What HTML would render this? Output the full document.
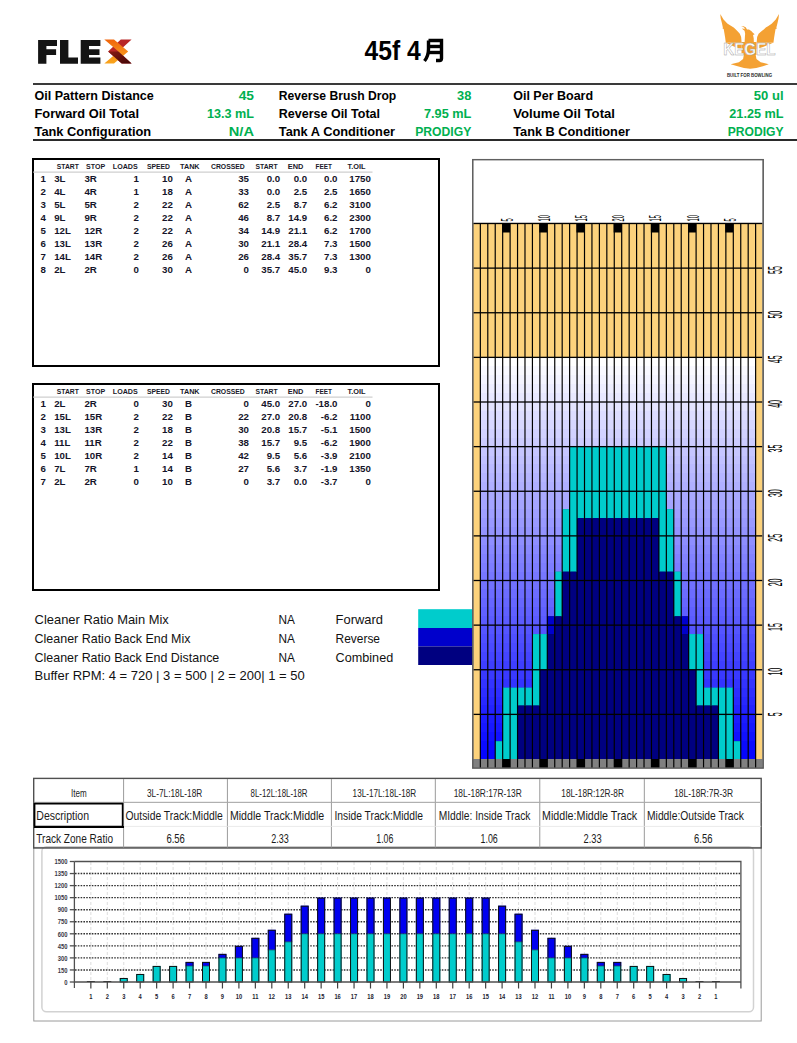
<!DOCTYPE html>
<html><head><meta charset="utf-8"><title>FLEX 45f</title>
<style>
html,body{margin:0;padding:0;background:#fff;}
body{width:797px;height:1043px;overflow:hidden;position:relative;}
svg{position:absolute;left:0;top:0;font-family:"Liberation Sans", sans-serif;}
</style></head><body>
<svg width="797" height="1043" viewBox="0 0 797 1043">
<g id="flex">
<path d="M38.1,40 H57 V46.1 H46.4 V49.2 H56.1 V54.9 H46.4 V63.7 H38.1 Z" fill="#141414"/>
<path d="M60,40 H68.4 V57.5 H78 V63.7 H60 Z" fill="#141414"/>
<path d="M80.7,40 H100.4 V46.1 H89 V49.2 H99.5 V54.9 H89 V57.5 H100.4 V63.7 H80.7 Z" fill="#141414"/>
<defs>
<linearGradient id="gor" x1="0" y1="0" x2="1" y2="1"><stop offset="0" stop-color="#f0600a"/><stop offset="1" stop-color="#f7941d"/></linearGradient>
<linearGradient id="grd" x1="0" y1="0" x2="1" y2="1"><stop offset="0" stop-color="#8a1a14"/><stop offset="1" stop-color="#3e0606"/></linearGradient>
</defs>
<linearGradient id="gor2" x1="0" y1="0" x2="0" y2="1"><stop offset="0" stop-color="#f0650c"/><stop offset="0.5" stop-color="#f68a1a"/><stop offset="1" stop-color="#f9a51c"/></linearGradient>
<path d="M120.8,39.6 H131.6 L118.5,51.6 L131.6,63.6 H121.7 L108.1,51.6 Z" fill="#b82626"/>
<path d="M104.3,39.6 H114 L128.2,51.6 L114,63.6 H104.3 L118.5,51.6 Z" fill="url(#gor2)"/>
<path d="M108.1,51.6 H118.5 L131.6,63.6 H121.7 Z" fill="url(#grd)"/>
</g>
<text x="364.6" y="59.5" font-size="28" font-weight="bold" fill="#000" text-anchor="start" textLength="56.2" lengthAdjust="spacingAndGlyphs" >45f 4</text>
<g fill="none" stroke="#000" stroke-width="3.4" stroke-linecap="butt">
<path d="M428.5,40.5 V49 Q428.5,56 424.5,61"/>
<path d="M428.5,40.5 H441.5 V58.5 Q441.5,60.5 439.5,60.5 H436"/>
<path d="M428.5,46.5 H441.5"/>
<path d="M428.5,52.5 H441.5"/>
</g>
<g id="kegel" fill="#f4a133">
<polygon points="720.26,14.08 720.67,18.16 721.89,23.05 722.87,27.54 722.55,28.60 723.69,28.92 724.50,33.65 725.16,37.73 725.81,42.63 741.63,42.63 741.14,36.92 739.84,33.82 737.80,31.62 734.54,28.35 733.72,27.46 731.27,25.91 727.60,23.70 723.53,19.62"/>
<polygon points="778.99,14.08 778.58,18.16 777.52,23.05 776.38,27.54 776.87,28.60 775.56,28.92 774.75,33.65 774.10,37.73 773.44,42.63 756.64,42.63 757.13,36.92 758.60,33.65 761.45,31.37 765.12,28.35 765.78,27.46 767.98,26.15 771.65,23.70 775.73,19.62"/>
<polygon points="741.06,25.91 743.51,26.15 745.71,27.29 747.02,29.41 748.97,29.58 751.26,31.04 752.89,32.84 754.68,34.31 753.05,34.88 753.70,38.14 753.87,42.63 744.57,42.63 744.90,36.92 745.14,33.65 744.57,30.80 742.94,29.58 741.88,28.60 743.75,28.76 744.73,29.25 744.41,27.78 742.94,26.72"/>
<polygon points="743.98,54.37 755.58,54.37 756.45,58.94 760.67,62.28 768.75,64.21 762.87,66.14 756.28,67.90 750.13,68.78 743.98,67.90 737.66,66.14 730.63,64.21 738.89,62.28 743.10,58.94"/>
<rect x="741.5" y="42" width="15" height="13" fill="#f4a133"/><polygon points="726.5,43 741.5,43 741.5,49 735,47"/><polygon points="772.5,43 756.5,43 756.5,49 763,47"/>
</g>
<text x="749.4" y="54.6" font-size="16.8" font-weight="bold" fill="#fff" stroke="#a0a0a0" stroke-width="0.45" text-anchor="middle" textLength="52.3" lengthAdjust="spacingAndGlyphs">KEGEL</text>
<text x="749.5" y="77.1" font-size="6.2" font-weight="bold" fill="#2a2a2a" text-anchor="middle" textLength="45.2" lengthAdjust="spacingAndGlyphs">BUILT FOR BOWLING</text>

<rect x="33" y="83" width="764" height="2" fill="#3a3a3a"/>
<rect x="33" y="139" width="764" height="2" fill="#2a2a2a"/>
<text x="34.5" y="99.8" font-size="12.6" font-weight="bold" fill="#000" text-anchor="start" textLength="119.3" lengthAdjust="spacingAndGlyphs" >Oil Pattern Distance</text>
<text x="254" y="99.8" font-size="12.6" font-weight="bold" fill="#00b050" text-anchor="end" textLength="15.3" lengthAdjust="spacingAndGlyphs" >45</text>
<text x="34.5" y="117.8" font-size="12.6" font-weight="bold" fill="#000" text-anchor="start" textLength="104.5" lengthAdjust="spacingAndGlyphs" >Forward Oil Total</text>
<text x="254" y="117.8" font-size="12.6" font-weight="bold" fill="#00b050" text-anchor="end" textLength="47" lengthAdjust="spacingAndGlyphs" >13.3 mL</text>
<text x="34.5" y="135.8" font-size="12.6" font-weight="bold" fill="#000" text-anchor="start" textLength="116.7" lengthAdjust="spacingAndGlyphs" >Tank Configuration</text>
<text x="254" y="135.8" font-size="12.6" font-weight="bold" fill="#00b050" text-anchor="end" textLength="25.2" lengthAdjust="spacingAndGlyphs" >N/A</text>
<text x="278.8" y="99.8" font-size="12.6" font-weight="bold" fill="#000" text-anchor="start" textLength="117.5" lengthAdjust="spacingAndGlyphs" >Reverse Brush Drop</text>
<text x="471.3" y="99.8" font-size="12.6" font-weight="bold" fill="#00b050" text-anchor="end" textLength="14.3" lengthAdjust="spacingAndGlyphs" >38</text>
<text x="278.8" y="117.8" font-size="12.6" font-weight="bold" fill="#000" text-anchor="start" textLength="101.2" lengthAdjust="spacingAndGlyphs" >Reverse Oil Total</text>
<text x="471.3" y="117.8" font-size="12.6" font-weight="bold" fill="#00b050" text-anchor="end" textLength="47.3" lengthAdjust="spacingAndGlyphs" >7.95 mL</text>
<text x="278.8" y="135.8" font-size="12.6" font-weight="bold" fill="#000" text-anchor="start" textLength="116.2" lengthAdjust="spacingAndGlyphs" >Tank A Conditioner</text>
<text x="471.3" y="135.8" font-size="12.6" font-weight="bold" fill="#00b050" text-anchor="end" textLength="56.1" lengthAdjust="spacingAndGlyphs" >PRODIGY</text>
<text x="513.2" y="99.8" font-size="12.6" font-weight="bold" fill="#000" text-anchor="start" textLength="79.9" lengthAdjust="spacingAndGlyphs" >Oil Per Board</text>
<text x="783.6" y="99.8" font-size="12.6" font-weight="bold" fill="#00b050" text-anchor="end" textLength="29.8" lengthAdjust="spacingAndGlyphs" >50 ul</text>
<text x="513.2" y="117.8" font-size="12.6" font-weight="bold" fill="#000" text-anchor="start" textLength="101.8" lengthAdjust="spacingAndGlyphs" >Volume Oil Total</text>
<text x="783.6" y="117.8" font-size="12.6" font-weight="bold" fill="#00b050" text-anchor="end" textLength="54.3" lengthAdjust="spacingAndGlyphs" >21.25 mL</text>
<text x="513.2" y="135.8" font-size="12.6" font-weight="bold" fill="#000" text-anchor="start" textLength="116.8" lengthAdjust="spacingAndGlyphs" >Tank B Conditioner</text>
<text x="783.6" y="135.8" font-size="12.6" font-weight="bold" fill="#00b050" text-anchor="end" textLength="55.9" lengthAdjust="spacingAndGlyphs" >PRODIGY</text>
<rect x="33" y="159" width="406" height="207" fill="none" stroke="#000" stroke-width="2"/>
<rect x="33" y="171.6" width="339.5" height="1" fill="#c4c4c4"/>
<text x="56.8" y="168.9" font-size="7" font-weight="bold" fill="#1a1a2a" textLength="22.1" lengthAdjust="spacingAndGlyphs">START</text>
<text x="86.0" y="168.9" font-size="7" font-weight="bold" fill="#1a1a2a" textLength="19.1" lengthAdjust="spacingAndGlyphs">STOP</text>
<text x="112.8" y="168.9" font-size="7" font-weight="bold" fill="#1a1a2a" textLength="24.9" lengthAdjust="spacingAndGlyphs">LOADS</text>
<text x="147" y="168.9" font-size="7" font-weight="bold" fill="#1a1a2a" textLength="23.0" lengthAdjust="spacingAndGlyphs">SPEED</text>
<text x="180" y="168.9" font-size="7" font-weight="bold" fill="#1a1a2a" textLength="19.6" lengthAdjust="spacingAndGlyphs">TANK</text>
<text x="211" y="168.9" font-size="7" font-weight="bold" fill="#1a1a2a" textLength="33.8" lengthAdjust="spacingAndGlyphs">CROSSED</text>
<text x="255.5" y="168.9" font-size="7" font-weight="bold" fill="#1a1a2a" textLength="22.2" lengthAdjust="spacingAndGlyphs">START</text>
<text x="287.8" y="168.9" font-size="7" font-weight="bold" fill="#1a1a2a" textLength="15.6" lengthAdjust="spacingAndGlyphs">END</text>
<text x="315.6" y="168.9" font-size="7" font-weight="bold" fill="#1a1a2a" textLength="16.4" lengthAdjust="spacingAndGlyphs">FEET</text>
<text x="347.6" y="168.9" font-size="7" font-weight="bold" fill="#1a1a2a" textLength="18.0" lengthAdjust="spacingAndGlyphs">T.OIL</text>
<text transform="translate(45.8,182.2) scale(1.13,1)" font-size="8.6" font-weight="bold" fill="#15152a" text-anchor="end">1</text>
<text transform="translate(54.2,182.2) scale(1.13,1)" font-size="8.6" font-weight="bold" fill="#15152a" text-anchor="start">3L</text>
<text transform="translate(84.4,182.2) scale(1.13,1)" font-size="8.6" font-weight="bold" fill="#15152a" text-anchor="start">3R</text>
<text transform="translate(139,182.2) scale(1.13,1)" font-size="8.6" font-weight="bold" fill="#15152a" text-anchor="end">1</text>
<text transform="translate(172.8,182.2) scale(1.13,1)" font-size="8.6" font-weight="bold" fill="#15152a" text-anchor="end">10</text>
<text transform="translate(185,182.2) scale(1.13,1)" font-size="8.6" font-weight="bold" fill="#15152a" text-anchor="start">A</text>
<text transform="translate(249,182.2) scale(1.13,1)" font-size="8.6" font-weight="bold" fill="#15152a" text-anchor="end">35</text>
<text transform="translate(280.2,182.2) scale(1.13,1)" font-size="8.6" font-weight="bold" fill="#15152a" text-anchor="end">0.0</text>
<text transform="translate(307.2,182.2) scale(1.13,1)" font-size="8.6" font-weight="bold" fill="#15152a" text-anchor="end">0.0</text>
<text transform="translate(337.5,182.2) scale(1.13,1)" font-size="8.6" font-weight="bold" fill="#15152a" text-anchor="end">0.0</text>
<text transform="translate(370.9,182.2) scale(1.13,1)" font-size="8.6" font-weight="bold" fill="#15152a" text-anchor="end">1750</text>
<text transform="translate(45.8,195.15) scale(1.13,1)" font-size="8.6" font-weight="bold" fill="#15152a" text-anchor="end">2</text>
<text transform="translate(54.2,195.15) scale(1.13,1)" font-size="8.6" font-weight="bold" fill="#15152a" text-anchor="start">4L</text>
<text transform="translate(84.4,195.15) scale(1.13,1)" font-size="8.6" font-weight="bold" fill="#15152a" text-anchor="start">4R</text>
<text transform="translate(139,195.15) scale(1.13,1)" font-size="8.6" font-weight="bold" fill="#15152a" text-anchor="end">1</text>
<text transform="translate(172.8,195.15) scale(1.13,1)" font-size="8.6" font-weight="bold" fill="#15152a" text-anchor="end">18</text>
<text transform="translate(185,195.15) scale(1.13,1)" font-size="8.6" font-weight="bold" fill="#15152a" text-anchor="start">A</text>
<text transform="translate(249,195.15) scale(1.13,1)" font-size="8.6" font-weight="bold" fill="#15152a" text-anchor="end">33</text>
<text transform="translate(280.2,195.15) scale(1.13,1)" font-size="8.6" font-weight="bold" fill="#15152a" text-anchor="end">0.0</text>
<text transform="translate(307.2,195.15) scale(1.13,1)" font-size="8.6" font-weight="bold" fill="#15152a" text-anchor="end">2.5</text>
<text transform="translate(337.5,195.15) scale(1.13,1)" font-size="8.6" font-weight="bold" fill="#15152a" text-anchor="end">2.5</text>
<text transform="translate(370.9,195.15) scale(1.13,1)" font-size="8.6" font-weight="bold" fill="#15152a" text-anchor="end">1650</text>
<text transform="translate(45.8,208.1) scale(1.13,1)" font-size="8.6" font-weight="bold" fill="#15152a" text-anchor="end">3</text>
<text transform="translate(54.2,208.1) scale(1.13,1)" font-size="8.6" font-weight="bold" fill="#15152a" text-anchor="start">5L</text>
<text transform="translate(84.4,208.1) scale(1.13,1)" font-size="8.6" font-weight="bold" fill="#15152a" text-anchor="start">5R</text>
<text transform="translate(139,208.1) scale(1.13,1)" font-size="8.6" font-weight="bold" fill="#15152a" text-anchor="end">2</text>
<text transform="translate(172.8,208.1) scale(1.13,1)" font-size="8.6" font-weight="bold" fill="#15152a" text-anchor="end">22</text>
<text transform="translate(185,208.1) scale(1.13,1)" font-size="8.6" font-weight="bold" fill="#15152a" text-anchor="start">A</text>
<text transform="translate(249,208.1) scale(1.13,1)" font-size="8.6" font-weight="bold" fill="#15152a" text-anchor="end">62</text>
<text transform="translate(280.2,208.1) scale(1.13,1)" font-size="8.6" font-weight="bold" fill="#15152a" text-anchor="end">2.5</text>
<text transform="translate(307.2,208.1) scale(1.13,1)" font-size="8.6" font-weight="bold" fill="#15152a" text-anchor="end">8.7</text>
<text transform="translate(337.5,208.1) scale(1.13,1)" font-size="8.6" font-weight="bold" fill="#15152a" text-anchor="end">6.2</text>
<text transform="translate(370.9,208.1) scale(1.13,1)" font-size="8.6" font-weight="bold" fill="#15152a" text-anchor="end">3100</text>
<text transform="translate(45.8,221.05) scale(1.13,1)" font-size="8.6" font-weight="bold" fill="#15152a" text-anchor="end">4</text>
<text transform="translate(54.2,221.05) scale(1.13,1)" font-size="8.6" font-weight="bold" fill="#15152a" text-anchor="start">9L</text>
<text transform="translate(84.4,221.05) scale(1.13,1)" font-size="8.6" font-weight="bold" fill="#15152a" text-anchor="start">9R</text>
<text transform="translate(139,221.05) scale(1.13,1)" font-size="8.6" font-weight="bold" fill="#15152a" text-anchor="end">2</text>
<text transform="translate(172.8,221.05) scale(1.13,1)" font-size="8.6" font-weight="bold" fill="#15152a" text-anchor="end">22</text>
<text transform="translate(185,221.05) scale(1.13,1)" font-size="8.6" font-weight="bold" fill="#15152a" text-anchor="start">A</text>
<text transform="translate(249,221.05) scale(1.13,1)" font-size="8.6" font-weight="bold" fill="#15152a" text-anchor="end">46</text>
<text transform="translate(280.2,221.05) scale(1.13,1)" font-size="8.6" font-weight="bold" fill="#15152a" text-anchor="end">8.7</text>
<text transform="translate(307.2,221.05) scale(1.13,1)" font-size="8.6" font-weight="bold" fill="#15152a" text-anchor="end">14.9</text>
<text transform="translate(337.5,221.05) scale(1.13,1)" font-size="8.6" font-weight="bold" fill="#15152a" text-anchor="end">6.2</text>
<text transform="translate(370.9,221.05) scale(1.13,1)" font-size="8.6" font-weight="bold" fill="#15152a" text-anchor="end">2300</text>
<text transform="translate(45.8,234.0) scale(1.13,1)" font-size="8.6" font-weight="bold" fill="#15152a" text-anchor="end">5</text>
<text transform="translate(54.2,234.0) scale(1.13,1)" font-size="8.6" font-weight="bold" fill="#15152a" text-anchor="start">12L</text>
<text transform="translate(84.4,234.0) scale(1.13,1)" font-size="8.6" font-weight="bold" fill="#15152a" text-anchor="start">12R</text>
<text transform="translate(139,234.0) scale(1.13,1)" font-size="8.6" font-weight="bold" fill="#15152a" text-anchor="end">2</text>
<text transform="translate(172.8,234.0) scale(1.13,1)" font-size="8.6" font-weight="bold" fill="#15152a" text-anchor="end">22</text>
<text transform="translate(185,234.0) scale(1.13,1)" font-size="8.6" font-weight="bold" fill="#15152a" text-anchor="start">A</text>
<text transform="translate(249,234.0) scale(1.13,1)" font-size="8.6" font-weight="bold" fill="#15152a" text-anchor="end">34</text>
<text transform="translate(280.2,234.0) scale(1.13,1)" font-size="8.6" font-weight="bold" fill="#15152a" text-anchor="end">14.9</text>
<text transform="translate(307.2,234.0) scale(1.13,1)" font-size="8.6" font-weight="bold" fill="#15152a" text-anchor="end">21.1</text>
<text transform="translate(337.5,234.0) scale(1.13,1)" font-size="8.6" font-weight="bold" fill="#15152a" text-anchor="end">6.2</text>
<text transform="translate(370.9,234.0) scale(1.13,1)" font-size="8.6" font-weight="bold" fill="#15152a" text-anchor="end">1700</text>
<text transform="translate(45.8,246.95) scale(1.13,1)" font-size="8.6" font-weight="bold" fill="#15152a" text-anchor="end">6</text>
<text transform="translate(54.2,246.95) scale(1.13,1)" font-size="8.6" font-weight="bold" fill="#15152a" text-anchor="start">13L</text>
<text transform="translate(84.4,246.95) scale(1.13,1)" font-size="8.6" font-weight="bold" fill="#15152a" text-anchor="start">13R</text>
<text transform="translate(139,246.95) scale(1.13,1)" font-size="8.6" font-weight="bold" fill="#15152a" text-anchor="end">2</text>
<text transform="translate(172.8,246.95) scale(1.13,1)" font-size="8.6" font-weight="bold" fill="#15152a" text-anchor="end">26</text>
<text transform="translate(185,246.95) scale(1.13,1)" font-size="8.6" font-weight="bold" fill="#15152a" text-anchor="start">A</text>
<text transform="translate(249,246.95) scale(1.13,1)" font-size="8.6" font-weight="bold" fill="#15152a" text-anchor="end">30</text>
<text transform="translate(280.2,246.95) scale(1.13,1)" font-size="8.6" font-weight="bold" fill="#15152a" text-anchor="end">21.1</text>
<text transform="translate(307.2,246.95) scale(1.13,1)" font-size="8.6" font-weight="bold" fill="#15152a" text-anchor="end">28.4</text>
<text transform="translate(337.5,246.95) scale(1.13,1)" font-size="8.6" font-weight="bold" fill="#15152a" text-anchor="end">7.3</text>
<text transform="translate(370.9,246.95) scale(1.13,1)" font-size="8.6" font-weight="bold" fill="#15152a" text-anchor="end">1500</text>
<text transform="translate(45.8,259.9) scale(1.13,1)" font-size="8.6" font-weight="bold" fill="#15152a" text-anchor="end">7</text>
<text transform="translate(54.2,259.9) scale(1.13,1)" font-size="8.6" font-weight="bold" fill="#15152a" text-anchor="start">14L</text>
<text transform="translate(84.4,259.9) scale(1.13,1)" font-size="8.6" font-weight="bold" fill="#15152a" text-anchor="start">14R</text>
<text transform="translate(139,259.9) scale(1.13,1)" font-size="8.6" font-weight="bold" fill="#15152a" text-anchor="end">2</text>
<text transform="translate(172.8,259.9) scale(1.13,1)" font-size="8.6" font-weight="bold" fill="#15152a" text-anchor="end">26</text>
<text transform="translate(185,259.9) scale(1.13,1)" font-size="8.6" font-weight="bold" fill="#15152a" text-anchor="start">A</text>
<text transform="translate(249,259.9) scale(1.13,1)" font-size="8.6" font-weight="bold" fill="#15152a" text-anchor="end">26</text>
<text transform="translate(280.2,259.9) scale(1.13,1)" font-size="8.6" font-weight="bold" fill="#15152a" text-anchor="end">28.4</text>
<text transform="translate(307.2,259.9) scale(1.13,1)" font-size="8.6" font-weight="bold" fill="#15152a" text-anchor="end">35.7</text>
<text transform="translate(337.5,259.9) scale(1.13,1)" font-size="8.6" font-weight="bold" fill="#15152a" text-anchor="end">7.3</text>
<text transform="translate(370.9,259.9) scale(1.13,1)" font-size="8.6" font-weight="bold" fill="#15152a" text-anchor="end">1300</text>
<text transform="translate(45.8,272.85) scale(1.13,1)" font-size="8.6" font-weight="bold" fill="#15152a" text-anchor="end">8</text>
<text transform="translate(54.2,272.85) scale(1.13,1)" font-size="8.6" font-weight="bold" fill="#15152a" text-anchor="start">2L</text>
<text transform="translate(84.4,272.85) scale(1.13,1)" font-size="8.6" font-weight="bold" fill="#15152a" text-anchor="start">2R</text>
<text transform="translate(139,272.85) scale(1.13,1)" font-size="8.6" font-weight="bold" fill="#15152a" text-anchor="end">0</text>
<text transform="translate(172.8,272.85) scale(1.13,1)" font-size="8.6" font-weight="bold" fill="#15152a" text-anchor="end">30</text>
<text transform="translate(185,272.85) scale(1.13,1)" font-size="8.6" font-weight="bold" fill="#15152a" text-anchor="start">A</text>
<text transform="translate(249,272.85) scale(1.13,1)" font-size="8.6" font-weight="bold" fill="#15152a" text-anchor="end">0</text>
<text transform="translate(280.2,272.85) scale(1.13,1)" font-size="8.6" font-weight="bold" fill="#15152a" text-anchor="end">35.7</text>
<text transform="translate(307.2,272.85) scale(1.13,1)" font-size="8.6" font-weight="bold" fill="#15152a" text-anchor="end">45.0</text>
<text transform="translate(337.5,272.85) scale(1.13,1)" font-size="8.6" font-weight="bold" fill="#15152a" text-anchor="end">9.3</text>
<text transform="translate(370.9,272.85) scale(1.13,1)" font-size="8.6" font-weight="bold" fill="#15152a" text-anchor="end">0</text>
<rect x="33" y="384" width="406" height="206" fill="none" stroke="#000" stroke-width="2"/>
<rect x="33" y="396.6" width="339.5" height="1" fill="#c4c4c4"/>
<text x="56.8" y="393.9" font-size="7" font-weight="bold" fill="#1a1a2a" textLength="22.1" lengthAdjust="spacingAndGlyphs">START</text>
<text x="86.0" y="393.9" font-size="7" font-weight="bold" fill="#1a1a2a" textLength="19.1" lengthAdjust="spacingAndGlyphs">STOP</text>
<text x="112.8" y="393.9" font-size="7" font-weight="bold" fill="#1a1a2a" textLength="24.9" lengthAdjust="spacingAndGlyphs">LOADS</text>
<text x="147" y="393.9" font-size="7" font-weight="bold" fill="#1a1a2a" textLength="23.0" lengthAdjust="spacingAndGlyphs">SPEED</text>
<text x="180" y="393.9" font-size="7" font-weight="bold" fill="#1a1a2a" textLength="19.6" lengthAdjust="spacingAndGlyphs">TANK</text>
<text x="211" y="393.9" font-size="7" font-weight="bold" fill="#1a1a2a" textLength="33.8" lengthAdjust="spacingAndGlyphs">CROSSED</text>
<text x="255.5" y="393.9" font-size="7" font-weight="bold" fill="#1a1a2a" textLength="22.2" lengthAdjust="spacingAndGlyphs">START</text>
<text x="287.8" y="393.9" font-size="7" font-weight="bold" fill="#1a1a2a" textLength="15.6" lengthAdjust="spacingAndGlyphs">END</text>
<text x="315.6" y="393.9" font-size="7" font-weight="bold" fill="#1a1a2a" textLength="16.4" lengthAdjust="spacingAndGlyphs">FEET</text>
<text x="347.6" y="393.9" font-size="7" font-weight="bold" fill="#1a1a2a" textLength="18.0" lengthAdjust="spacingAndGlyphs">T.OIL</text>
<text transform="translate(45.8,407.2) scale(1.13,1)" font-size="8.6" font-weight="bold" fill="#15152a" text-anchor="end">1</text>
<text transform="translate(54.2,407.2) scale(1.13,1)" font-size="8.6" font-weight="bold" fill="#15152a" text-anchor="start">2L</text>
<text transform="translate(84.4,407.2) scale(1.13,1)" font-size="8.6" font-weight="bold" fill="#15152a" text-anchor="start">2R</text>
<text transform="translate(139,407.2) scale(1.13,1)" font-size="8.6" font-weight="bold" fill="#15152a" text-anchor="end">0</text>
<text transform="translate(172.8,407.2) scale(1.13,1)" font-size="8.6" font-weight="bold" fill="#15152a" text-anchor="end">30</text>
<text transform="translate(185,407.2) scale(1.13,1)" font-size="8.6" font-weight="bold" fill="#15152a" text-anchor="start">B</text>
<text transform="translate(249,407.2) scale(1.13,1)" font-size="8.6" font-weight="bold" fill="#15152a" text-anchor="end">0</text>
<text transform="translate(280.2,407.2) scale(1.13,1)" font-size="8.6" font-weight="bold" fill="#15152a" text-anchor="end">45.0</text>
<text transform="translate(307.2,407.2) scale(1.13,1)" font-size="8.6" font-weight="bold" fill="#15152a" text-anchor="end">27.0</text>
<text transform="translate(337.5,407.2) scale(1.13,1)" font-size="8.6" font-weight="bold" fill="#15152a" text-anchor="end">-18.0</text>
<text transform="translate(370.9,407.2) scale(1.13,1)" font-size="8.6" font-weight="bold" fill="#15152a" text-anchor="end">0</text>
<text transform="translate(45.8,420.15) scale(1.13,1)" font-size="8.6" font-weight="bold" fill="#15152a" text-anchor="end">2</text>
<text transform="translate(54.2,420.15) scale(1.13,1)" font-size="8.6" font-weight="bold" fill="#15152a" text-anchor="start">15L</text>
<text transform="translate(84.4,420.15) scale(1.13,1)" font-size="8.6" font-weight="bold" fill="#15152a" text-anchor="start">15R</text>
<text transform="translate(139,420.15) scale(1.13,1)" font-size="8.6" font-weight="bold" fill="#15152a" text-anchor="end">2</text>
<text transform="translate(172.8,420.15) scale(1.13,1)" font-size="8.6" font-weight="bold" fill="#15152a" text-anchor="end">22</text>
<text transform="translate(185,420.15) scale(1.13,1)" font-size="8.6" font-weight="bold" fill="#15152a" text-anchor="start">B</text>
<text transform="translate(249,420.15) scale(1.13,1)" font-size="8.6" font-weight="bold" fill="#15152a" text-anchor="end">22</text>
<text transform="translate(280.2,420.15) scale(1.13,1)" font-size="8.6" font-weight="bold" fill="#15152a" text-anchor="end">27.0</text>
<text transform="translate(307.2,420.15) scale(1.13,1)" font-size="8.6" font-weight="bold" fill="#15152a" text-anchor="end">20.8</text>
<text transform="translate(337.5,420.15) scale(1.13,1)" font-size="8.6" font-weight="bold" fill="#15152a" text-anchor="end">-6.2</text>
<text transform="translate(370.9,420.15) scale(1.13,1)" font-size="8.6" font-weight="bold" fill="#15152a" text-anchor="end">1100</text>
<text transform="translate(45.8,433.1) scale(1.13,1)" font-size="8.6" font-weight="bold" fill="#15152a" text-anchor="end">3</text>
<text transform="translate(54.2,433.1) scale(1.13,1)" font-size="8.6" font-weight="bold" fill="#15152a" text-anchor="start">13L</text>
<text transform="translate(84.4,433.1) scale(1.13,1)" font-size="8.6" font-weight="bold" fill="#15152a" text-anchor="start">13R</text>
<text transform="translate(139,433.1) scale(1.13,1)" font-size="8.6" font-weight="bold" fill="#15152a" text-anchor="end">2</text>
<text transform="translate(172.8,433.1) scale(1.13,1)" font-size="8.6" font-weight="bold" fill="#15152a" text-anchor="end">18</text>
<text transform="translate(185,433.1) scale(1.13,1)" font-size="8.6" font-weight="bold" fill="#15152a" text-anchor="start">B</text>
<text transform="translate(249,433.1) scale(1.13,1)" font-size="8.6" font-weight="bold" fill="#15152a" text-anchor="end">30</text>
<text transform="translate(280.2,433.1) scale(1.13,1)" font-size="8.6" font-weight="bold" fill="#15152a" text-anchor="end">20.8</text>
<text transform="translate(307.2,433.1) scale(1.13,1)" font-size="8.6" font-weight="bold" fill="#15152a" text-anchor="end">15.7</text>
<text transform="translate(337.5,433.1) scale(1.13,1)" font-size="8.6" font-weight="bold" fill="#15152a" text-anchor="end">-5.1</text>
<text transform="translate(370.9,433.1) scale(1.13,1)" font-size="8.6" font-weight="bold" fill="#15152a" text-anchor="end">1500</text>
<text transform="translate(45.8,446.05) scale(1.13,1)" font-size="8.6" font-weight="bold" fill="#15152a" text-anchor="end">4</text>
<text transform="translate(54.2,446.05) scale(1.13,1)" font-size="8.6" font-weight="bold" fill="#15152a" text-anchor="start">11L</text>
<text transform="translate(84.4,446.05) scale(1.13,1)" font-size="8.6" font-weight="bold" fill="#15152a" text-anchor="start">11R</text>
<text transform="translate(139,446.05) scale(1.13,1)" font-size="8.6" font-weight="bold" fill="#15152a" text-anchor="end">2</text>
<text transform="translate(172.8,446.05) scale(1.13,1)" font-size="8.6" font-weight="bold" fill="#15152a" text-anchor="end">22</text>
<text transform="translate(185,446.05) scale(1.13,1)" font-size="8.6" font-weight="bold" fill="#15152a" text-anchor="start">B</text>
<text transform="translate(249,446.05) scale(1.13,1)" font-size="8.6" font-weight="bold" fill="#15152a" text-anchor="end">38</text>
<text transform="translate(280.2,446.05) scale(1.13,1)" font-size="8.6" font-weight="bold" fill="#15152a" text-anchor="end">15.7</text>
<text transform="translate(307.2,446.05) scale(1.13,1)" font-size="8.6" font-weight="bold" fill="#15152a" text-anchor="end">9.5</text>
<text transform="translate(337.5,446.05) scale(1.13,1)" font-size="8.6" font-weight="bold" fill="#15152a" text-anchor="end">-6.2</text>
<text transform="translate(370.9,446.05) scale(1.13,1)" font-size="8.6" font-weight="bold" fill="#15152a" text-anchor="end">1900</text>
<text transform="translate(45.8,459.0) scale(1.13,1)" font-size="8.6" font-weight="bold" fill="#15152a" text-anchor="end">5</text>
<text transform="translate(54.2,459.0) scale(1.13,1)" font-size="8.6" font-weight="bold" fill="#15152a" text-anchor="start">10L</text>
<text transform="translate(84.4,459.0) scale(1.13,1)" font-size="8.6" font-weight="bold" fill="#15152a" text-anchor="start">10R</text>
<text transform="translate(139,459.0) scale(1.13,1)" font-size="8.6" font-weight="bold" fill="#15152a" text-anchor="end">2</text>
<text transform="translate(172.8,459.0) scale(1.13,1)" font-size="8.6" font-weight="bold" fill="#15152a" text-anchor="end">14</text>
<text transform="translate(185,459.0) scale(1.13,1)" font-size="8.6" font-weight="bold" fill="#15152a" text-anchor="start">B</text>
<text transform="translate(249,459.0) scale(1.13,1)" font-size="8.6" font-weight="bold" fill="#15152a" text-anchor="end">42</text>
<text transform="translate(280.2,459.0) scale(1.13,1)" font-size="8.6" font-weight="bold" fill="#15152a" text-anchor="end">9.5</text>
<text transform="translate(307.2,459.0) scale(1.13,1)" font-size="8.6" font-weight="bold" fill="#15152a" text-anchor="end">5.6</text>
<text transform="translate(337.5,459.0) scale(1.13,1)" font-size="8.6" font-weight="bold" fill="#15152a" text-anchor="end">-3.9</text>
<text transform="translate(370.9,459.0) scale(1.13,1)" font-size="8.6" font-weight="bold" fill="#15152a" text-anchor="end">2100</text>
<text transform="translate(45.8,471.95) scale(1.13,1)" font-size="8.6" font-weight="bold" fill="#15152a" text-anchor="end">6</text>
<text transform="translate(54.2,471.95) scale(1.13,1)" font-size="8.6" font-weight="bold" fill="#15152a" text-anchor="start">7L</text>
<text transform="translate(84.4,471.95) scale(1.13,1)" font-size="8.6" font-weight="bold" fill="#15152a" text-anchor="start">7R</text>
<text transform="translate(139,471.95) scale(1.13,1)" font-size="8.6" font-weight="bold" fill="#15152a" text-anchor="end">1</text>
<text transform="translate(172.8,471.95) scale(1.13,1)" font-size="8.6" font-weight="bold" fill="#15152a" text-anchor="end">14</text>
<text transform="translate(185,471.95) scale(1.13,1)" font-size="8.6" font-weight="bold" fill="#15152a" text-anchor="start">B</text>
<text transform="translate(249,471.95) scale(1.13,1)" font-size="8.6" font-weight="bold" fill="#15152a" text-anchor="end">27</text>
<text transform="translate(280.2,471.95) scale(1.13,1)" font-size="8.6" font-weight="bold" fill="#15152a" text-anchor="end">5.6</text>
<text transform="translate(307.2,471.95) scale(1.13,1)" font-size="8.6" font-weight="bold" fill="#15152a" text-anchor="end">3.7</text>
<text transform="translate(337.5,471.95) scale(1.13,1)" font-size="8.6" font-weight="bold" fill="#15152a" text-anchor="end">-1.9</text>
<text transform="translate(370.9,471.95) scale(1.13,1)" font-size="8.6" font-weight="bold" fill="#15152a" text-anchor="end">1350</text>
<text transform="translate(45.8,484.9) scale(1.13,1)" font-size="8.6" font-weight="bold" fill="#15152a" text-anchor="end">7</text>
<text transform="translate(54.2,484.9) scale(1.13,1)" font-size="8.6" font-weight="bold" fill="#15152a" text-anchor="start">2L</text>
<text transform="translate(84.4,484.9) scale(1.13,1)" font-size="8.6" font-weight="bold" fill="#15152a" text-anchor="start">2R</text>
<text transform="translate(139,484.9) scale(1.13,1)" font-size="8.6" font-weight="bold" fill="#15152a" text-anchor="end">0</text>
<text transform="translate(172.8,484.9) scale(1.13,1)" font-size="8.6" font-weight="bold" fill="#15152a" text-anchor="end">10</text>
<text transform="translate(185,484.9) scale(1.13,1)" font-size="8.6" font-weight="bold" fill="#15152a" text-anchor="start">B</text>
<text transform="translate(249,484.9) scale(1.13,1)" font-size="8.6" font-weight="bold" fill="#15152a" text-anchor="end">0</text>
<text transform="translate(280.2,484.9) scale(1.13,1)" font-size="8.6" font-weight="bold" fill="#15152a" text-anchor="end">3.7</text>
<text transform="translate(307.2,484.9) scale(1.13,1)" font-size="8.6" font-weight="bold" fill="#15152a" text-anchor="end">0.0</text>
<text transform="translate(337.5,484.9) scale(1.13,1)" font-size="8.6" font-weight="bold" fill="#15152a" text-anchor="end">-3.7</text>
<text transform="translate(370.9,484.9) scale(1.13,1)" font-size="8.6" font-weight="bold" fill="#15152a" text-anchor="end">0</text>
<text x="34.6" y="624.0" font-size="12.6" font-weight="normal" fill="#111" text-anchor="start" textLength="134.2" lengthAdjust="spacingAndGlyphs" >Cleaner Ratio Main Mix</text>
<text x="278.6" y="624.0" font-size="12.6" font-weight="normal" fill="#111" text-anchor="start" textLength="16.4" lengthAdjust="spacingAndGlyphs" >NA</text>
<text x="34.6" y="642.8" font-size="12.6" font-weight="normal" fill="#111" text-anchor="start" textLength="155.9" lengthAdjust="spacingAndGlyphs" >Cleaner Ratio Back End Mix</text>
<text x="278.6" y="642.8" font-size="12.6" font-weight="normal" fill="#111" text-anchor="start" textLength="16.4" lengthAdjust="spacingAndGlyphs" >NA</text>
<text x="34.6" y="661.6" font-size="12.6" font-weight="normal" fill="#111" text-anchor="start" textLength="184.7" lengthAdjust="spacingAndGlyphs" >Cleaner Ratio Back End Distance</text>
<text x="278.6" y="661.6" font-size="12.6" font-weight="normal" fill="#111" text-anchor="start" textLength="16.4" lengthAdjust="spacingAndGlyphs" >NA</text>
<text x="335.6" y="624.0" font-size="12.6" font-weight="normal" fill="#111" text-anchor="start" textLength="47.4" lengthAdjust="spacingAndGlyphs" >Forward</text>
<text x="335.6" y="642.8" font-size="12.6" font-weight="normal" fill="#111" text-anchor="start" textLength="44.4" lengthAdjust="spacingAndGlyphs" >Reverse</text>
<text x="335.6" y="661.6" font-size="12.6" font-weight="normal" fill="#111" text-anchor="start" textLength="57.6" lengthAdjust="spacingAndGlyphs" >Combined</text>
<text x="34.6" y="680.0" font-size="12.6" font-weight="normal" fill="#111" text-anchor="start" textLength="270.1" lengthAdjust="spacingAndGlyphs" >Buffer RPM: 4 = 720 | 3 = 500 | 2 = 200| 1 = 50</text>
<rect x="418.2" y="609.2" width="54.5" height="18.8" fill="#00cccc"/>
<rect x="418.2" y="628" width="54.5" height="18.4" fill="#0000cc"/>
<rect x="418.2" y="646.4" width="54.5" height="18.6" fill="#000080"/>
<defs><linearGradient id="lanegrad" gradientUnits="userSpaceOnUse" x1="0" y1="357.37" x2="0" y2="759.00"><stop offset="0.0000" stop-color="rgb(255,255,255)"/><stop offset="0.0222" stop-color="rgb(255,255,255)"/><stop offset="0.0222" stop-color="rgb(249,249,255)"/><stop offset="0.0444" stop-color="rgb(249,249,255)"/><stop offset="0.0444" stop-color="rgb(244,244,255)"/><stop offset="0.0667" stop-color="rgb(244,244,255)"/><stop offset="0.0667" stop-color="rgb(238,238,255)"/><stop offset="0.0889" stop-color="rgb(238,238,255)"/><stop offset="0.0889" stop-color="rgb(232,232,255)"/><stop offset="0.1111" stop-color="rgb(232,232,255)"/><stop offset="0.1111" stop-color="rgb(227,227,255)"/><stop offset="0.1333" stop-color="rgb(227,227,255)"/><stop offset="0.1333" stop-color="rgb(221,221,255)"/><stop offset="0.1556" stop-color="rgb(221,221,255)"/><stop offset="0.1556" stop-color="rgb(215,215,255)"/><stop offset="0.1778" stop-color="rgb(215,215,255)"/><stop offset="0.1778" stop-color="rgb(210,210,255)"/><stop offset="0.2000" stop-color="rgb(210,210,255)"/><stop offset="0.2000" stop-color="rgb(204,204,255)"/><stop offset="0.2222" stop-color="rgb(204,204,255)"/><stop offset="0.2222" stop-color="rgb(198,198,255)"/><stop offset="0.2444" stop-color="rgb(198,198,255)"/><stop offset="0.2444" stop-color="rgb(193,193,255)"/><stop offset="0.2667" stop-color="rgb(193,193,255)"/><stop offset="0.2667" stop-color="rgb(187,187,255)"/><stop offset="0.2889" stop-color="rgb(187,187,255)"/><stop offset="0.2889" stop-color="rgb(181,181,255)"/><stop offset="0.3111" stop-color="rgb(181,181,255)"/><stop offset="0.3111" stop-color="rgb(176,176,255)"/><stop offset="0.3333" stop-color="rgb(176,176,255)"/><stop offset="0.3333" stop-color="rgb(170,170,255)"/><stop offset="0.3556" stop-color="rgb(170,170,255)"/><stop offset="0.3556" stop-color="rgb(164,164,255)"/><stop offset="0.3778" stop-color="rgb(164,164,255)"/><stop offset="0.3778" stop-color="rgb(159,159,255)"/><stop offset="0.4000" stop-color="rgb(159,159,255)"/><stop offset="0.4000" stop-color="rgb(153,153,255)"/><stop offset="0.4222" stop-color="rgb(153,153,255)"/><stop offset="0.4222" stop-color="rgb(147,147,255)"/><stop offset="0.4444" stop-color="rgb(147,147,255)"/><stop offset="0.4444" stop-color="rgb(142,142,255)"/><stop offset="0.4667" stop-color="rgb(142,142,255)"/><stop offset="0.4667" stop-color="rgb(136,136,255)"/><stop offset="0.4889" stop-color="rgb(136,136,255)"/><stop offset="0.4889" stop-color="rgb(130,130,255)"/><stop offset="0.5111" stop-color="rgb(130,130,255)"/><stop offset="0.5111" stop-color="rgb(125,125,255)"/><stop offset="0.5333" stop-color="rgb(125,125,255)"/><stop offset="0.5333" stop-color="rgb(119,119,255)"/><stop offset="0.5556" stop-color="rgb(119,119,255)"/><stop offset="0.5556" stop-color="rgb(113,113,255)"/><stop offset="0.5778" stop-color="rgb(113,113,255)"/><stop offset="0.5778" stop-color="rgb(108,108,255)"/><stop offset="0.6000" stop-color="rgb(108,108,255)"/><stop offset="0.6000" stop-color="rgb(102,102,255)"/><stop offset="0.6222" stop-color="rgb(102,102,255)"/><stop offset="0.6222" stop-color="rgb(96,96,255)"/><stop offset="0.6444" stop-color="rgb(96,96,255)"/><stop offset="0.6444" stop-color="rgb(91,91,255)"/><stop offset="0.6667" stop-color="rgb(91,91,255)"/><stop offset="0.6667" stop-color="rgb(85,85,255)"/><stop offset="0.6889" stop-color="rgb(85,85,255)"/><stop offset="0.6889" stop-color="rgb(79,79,255)"/><stop offset="0.7111" stop-color="rgb(79,79,255)"/><stop offset="0.7111" stop-color="rgb(74,74,255)"/><stop offset="0.7333" stop-color="rgb(74,74,255)"/><stop offset="0.7333" stop-color="rgb(68,68,255)"/><stop offset="0.7556" stop-color="rgb(68,68,255)"/><stop offset="0.7556" stop-color="rgb(62,62,255)"/><stop offset="0.7778" stop-color="rgb(62,62,255)"/><stop offset="0.7778" stop-color="rgb(57,57,255)"/><stop offset="0.8000" stop-color="rgb(57,57,255)"/><stop offset="0.8000" stop-color="rgb(51,51,255)"/><stop offset="0.8222" stop-color="rgb(51,51,255)"/><stop offset="0.8222" stop-color="rgb(45,45,255)"/><stop offset="0.8444" stop-color="rgb(45,45,255)"/><stop offset="0.8444" stop-color="rgb(40,40,255)"/><stop offset="0.8667" stop-color="rgb(40,40,255)"/><stop offset="0.8667" stop-color="rgb(34,34,255)"/><stop offset="0.8889" stop-color="rgb(34,34,255)"/><stop offset="0.8889" stop-color="rgb(28,28,255)"/><stop offset="0.9111" stop-color="rgb(28,28,255)"/><stop offset="0.9111" stop-color="rgb(23,23,255)"/><stop offset="0.9333" stop-color="rgb(23,23,255)"/><stop offset="0.9333" stop-color="rgb(17,17,255)"/><stop offset="0.9556" stop-color="rgb(17,17,255)"/><stop offset="0.9556" stop-color="rgb(11,11,255)"/><stop offset="0.9778" stop-color="rgb(11,11,255)"/><stop offset="0.9778" stop-color="rgb(6,6,255)"/><stop offset="1.0000" stop-color="rgb(6,6,255)"/></linearGradient></defs>
<rect x="472.7" y="159.6" width="290.5" height="608.4" fill="#fff" stroke="#606060" stroke-width="1.2"/>
<rect x="473.5" y="222.90" width="288.80" height="545.10" fill="#000"/>
<rect x="473.50" y="223.50" width="6.24" height="535.50" fill="#fcd27c"/>
<rect x="473.50" y="759.00" width="6.24" height="9.00" fill="#808080"/>
<rect x="480.94" y="223.50" width="6.25" height="134.17" fill="#fcd27c"/>
<rect x="480.94" y="357.37" width="6.25" height="401.63" fill="url(#lanegrad)"/>
<rect x="480.94" y="759.00" width="6.25" height="9.00" fill="#808080"/>
<rect x="488.38" y="223.50" width="6.25" height="134.17" fill="#fcd27c"/>
<rect x="488.38" y="357.37" width="6.25" height="401.63" fill="url(#lanegrad)"/>
<rect x="488.38" y="759.00" width="6.25" height="9.00" fill="#808080"/>
<rect x="495.82" y="223.50" width="6.25" height="134.17" fill="#fcd27c"/>
<rect x="495.82" y="357.37" width="6.25" height="384.07" fill="url(#lanegrad)"/>
<rect x="495.82" y="741.15" width="6.25" height="17.85" fill="#00cccc"/>
<rect x="495.82" y="759.00" width="6.25" height="9.00" fill="#808080"/>
<rect x="503.26" y="223.50" width="6.25" height="134.17" fill="#fcd27c"/>
<rect x="503.26" y="357.37" width="6.25" height="330.53" fill="url(#lanegrad)"/>
<rect x="503.26" y="687.60" width="6.25" height="71.40" fill="#00cccc"/>
<rect x="503.26" y="759.00" width="6.25" height="9.00" fill="#000"/>
<rect x="502.06" y="223.50" width="8.65" height="9.00" fill="#000"/>
<rect x="510.70" y="223.50" width="6.25" height="134.17" fill="#fcd27c"/>
<rect x="510.70" y="357.37" width="6.25" height="330.53" fill="url(#lanegrad)"/>
<rect x="510.70" y="687.60" width="6.25" height="71.40" fill="#00cccc"/>
<rect x="510.70" y="759.00" width="6.25" height="9.00" fill="#808080"/>
<rect x="518.14" y="223.50" width="6.25" height="134.17" fill="#fcd27c"/>
<rect x="518.14" y="357.37" width="6.25" height="330.53" fill="url(#lanegrad)"/>
<rect x="518.14" y="687.60" width="6.25" height="18.15" fill="#00cccc"/>
<rect x="518.14" y="705.45" width="6.25" height="53.55" fill="#000080"/>
<rect x="518.14" y="759.00" width="6.25" height="9.00" fill="#808080"/>
<rect x="525.58" y="223.50" width="6.25" height="134.17" fill="#fcd27c"/>
<rect x="525.58" y="357.37" width="6.25" height="330.53" fill="url(#lanegrad)"/>
<rect x="525.58" y="687.60" width="6.25" height="18.15" fill="#00cccc"/>
<rect x="525.58" y="705.45" width="6.25" height="53.55" fill="#000080"/>
<rect x="525.58" y="759.00" width="6.25" height="9.00" fill="#808080"/>
<rect x="533.02" y="223.50" width="6.25" height="134.17" fill="#fcd27c"/>
<rect x="533.02" y="357.37" width="6.25" height="276.97" fill="url(#lanegrad)"/>
<rect x="533.02" y="634.05" width="6.25" height="71.70" fill="#00cccc"/>
<rect x="533.02" y="705.45" width="6.25" height="53.55" fill="#000080"/>
<rect x="533.02" y="759.00" width="6.25" height="9.00" fill="#808080"/>
<rect x="540.46" y="223.50" width="6.25" height="134.17" fill="#fcd27c"/>
<rect x="540.46" y="357.37" width="6.25" height="276.97" fill="url(#lanegrad)"/>
<rect x="540.46" y="634.05" width="6.25" height="36.00" fill="#00cccc"/>
<rect x="540.46" y="669.75" width="6.25" height="89.25" fill="#000080"/>
<rect x="540.46" y="759.00" width="6.25" height="9.00" fill="#000"/>
<rect x="539.26" y="223.50" width="8.65" height="9.00" fill="#000"/>
<rect x="547.90" y="223.50" width="6.25" height="134.17" fill="#fcd27c"/>
<rect x="547.90" y="357.37" width="6.25" height="259.13" fill="url(#lanegrad)"/>
<rect x="547.90" y="616.20" width="6.25" height="18.15" fill="#0000cc"/>
<rect x="547.90" y="634.05" width="6.25" height="124.95" fill="#000080"/>
<rect x="547.90" y="759.00" width="6.25" height="9.00" fill="#808080"/>
<rect x="555.34" y="223.50" width="6.25" height="134.17" fill="#fcd27c"/>
<rect x="555.34" y="357.37" width="6.25" height="214.50" fill="url(#lanegrad)"/>
<rect x="555.34" y="571.58" width="6.25" height="44.92" fill="#00cccc"/>
<rect x="555.34" y="616.20" width="6.25" height="142.80" fill="#000080"/>
<rect x="555.34" y="759.00" width="6.25" height="9.00" fill="#808080"/>
<rect x="562.78" y="223.50" width="6.25" height="134.17" fill="#fcd27c"/>
<rect x="562.78" y="357.37" width="6.25" height="152.03" fill="url(#lanegrad)"/>
<rect x="562.78" y="509.10" width="6.25" height="62.78" fill="#00cccc"/>
<rect x="562.78" y="571.58" width="6.25" height="187.42" fill="#000080"/>
<rect x="562.78" y="759.00" width="6.25" height="9.00" fill="#808080"/>
<rect x="570.22" y="223.50" width="6.25" height="134.17" fill="#fcd27c"/>
<rect x="570.22" y="357.37" width="6.25" height="89.55" fill="url(#lanegrad)"/>
<rect x="570.22" y="446.62" width="6.25" height="125.25" fill="#00cccc"/>
<rect x="570.22" y="571.58" width="6.25" height="187.42" fill="#000080"/>
<rect x="570.22" y="759.00" width="6.25" height="9.00" fill="#808080"/>
<rect x="577.66" y="223.50" width="6.25" height="134.17" fill="#fcd27c"/>
<rect x="577.66" y="357.37" width="6.25" height="89.55" fill="url(#lanegrad)"/>
<rect x="577.66" y="446.62" width="6.25" height="71.70" fill="#00cccc"/>
<rect x="577.66" y="518.02" width="6.25" height="240.98" fill="#000080"/>
<rect x="577.66" y="759.00" width="6.25" height="9.00" fill="#000"/>
<rect x="576.46" y="223.50" width="8.65" height="9.00" fill="#000"/>
<rect x="585.10" y="223.50" width="6.25" height="134.17" fill="#fcd27c"/>
<rect x="585.10" y="357.37" width="6.25" height="89.55" fill="url(#lanegrad)"/>
<rect x="585.10" y="446.62" width="6.25" height="71.70" fill="#00cccc"/>
<rect x="585.10" y="518.02" width="6.25" height="240.98" fill="#000080"/>
<rect x="585.10" y="759.00" width="6.25" height="9.00" fill="#808080"/>
<rect x="592.54" y="223.50" width="6.25" height="134.17" fill="#fcd27c"/>
<rect x="592.54" y="357.37" width="6.25" height="89.55" fill="url(#lanegrad)"/>
<rect x="592.54" y="446.62" width="6.25" height="71.70" fill="#00cccc"/>
<rect x="592.54" y="518.02" width="6.25" height="240.98" fill="#000080"/>
<rect x="592.54" y="759.00" width="6.25" height="9.00" fill="#808080"/>
<rect x="599.98" y="223.50" width="6.25" height="134.17" fill="#fcd27c"/>
<rect x="599.98" y="357.37" width="6.25" height="89.55" fill="url(#lanegrad)"/>
<rect x="599.98" y="446.62" width="6.25" height="71.70" fill="#00cccc"/>
<rect x="599.98" y="518.02" width="6.25" height="240.98" fill="#000080"/>
<rect x="599.98" y="759.00" width="6.25" height="9.00" fill="#808080"/>
<rect x="607.42" y="223.50" width="6.25" height="134.17" fill="#fcd27c"/>
<rect x="607.42" y="357.37" width="6.25" height="89.55" fill="url(#lanegrad)"/>
<rect x="607.42" y="446.62" width="6.25" height="71.70" fill="#00cccc"/>
<rect x="607.42" y="518.02" width="6.25" height="240.98" fill="#000080"/>
<rect x="607.42" y="759.00" width="6.25" height="9.00" fill="#808080"/>
<rect x="614.86" y="223.50" width="6.25" height="134.17" fill="#fcd27c"/>
<rect x="614.86" y="357.37" width="6.25" height="89.55" fill="url(#lanegrad)"/>
<rect x="614.86" y="446.62" width="6.25" height="71.70" fill="#00cccc"/>
<rect x="614.86" y="518.02" width="6.25" height="240.98" fill="#000080"/>
<rect x="614.86" y="759.00" width="6.25" height="9.00" fill="#000"/>
<rect x="613.66" y="223.50" width="8.65" height="9.00" fill="#000"/>
<rect x="622.30" y="223.50" width="6.25" height="134.17" fill="#fcd27c"/>
<rect x="622.30" y="357.37" width="6.25" height="89.55" fill="url(#lanegrad)"/>
<rect x="622.30" y="446.62" width="6.25" height="71.70" fill="#00cccc"/>
<rect x="622.30" y="518.02" width="6.25" height="240.98" fill="#000080"/>
<rect x="622.30" y="759.00" width="6.25" height="9.00" fill="#808080"/>
<rect x="629.74" y="223.50" width="6.25" height="134.17" fill="#fcd27c"/>
<rect x="629.74" y="357.37" width="6.25" height="89.55" fill="url(#lanegrad)"/>
<rect x="629.74" y="446.62" width="6.25" height="71.70" fill="#00cccc"/>
<rect x="629.74" y="518.02" width="6.25" height="240.98" fill="#000080"/>
<rect x="629.74" y="759.00" width="6.25" height="9.00" fill="#808080"/>
<rect x="637.18" y="223.50" width="6.25" height="134.17" fill="#fcd27c"/>
<rect x="637.18" y="357.37" width="6.25" height="89.55" fill="url(#lanegrad)"/>
<rect x="637.18" y="446.62" width="6.25" height="71.70" fill="#00cccc"/>
<rect x="637.18" y="518.02" width="6.25" height="240.98" fill="#000080"/>
<rect x="637.18" y="759.00" width="6.25" height="9.00" fill="#808080"/>
<rect x="644.62" y="223.50" width="6.25" height="134.17" fill="#fcd27c"/>
<rect x="644.62" y="357.37" width="6.25" height="89.55" fill="url(#lanegrad)"/>
<rect x="644.62" y="446.62" width="6.25" height="71.70" fill="#00cccc"/>
<rect x="644.62" y="518.02" width="6.25" height="240.98" fill="#000080"/>
<rect x="644.62" y="759.00" width="6.25" height="9.00" fill="#808080"/>
<rect x="652.06" y="223.50" width="6.25" height="134.17" fill="#fcd27c"/>
<rect x="652.06" y="357.37" width="6.25" height="89.55" fill="url(#lanegrad)"/>
<rect x="652.06" y="446.62" width="6.25" height="71.70" fill="#00cccc"/>
<rect x="652.06" y="518.02" width="6.25" height="240.98" fill="#000080"/>
<rect x="652.06" y="759.00" width="6.25" height="9.00" fill="#000"/>
<rect x="650.86" y="223.50" width="8.65" height="9.00" fill="#000"/>
<rect x="659.50" y="223.50" width="6.25" height="134.17" fill="#fcd27c"/>
<rect x="659.50" y="357.37" width="6.25" height="89.55" fill="url(#lanegrad)"/>
<rect x="659.50" y="446.62" width="6.25" height="125.25" fill="#00cccc"/>
<rect x="659.50" y="571.58" width="6.25" height="187.42" fill="#000080"/>
<rect x="659.50" y="759.00" width="6.25" height="9.00" fill="#808080"/>
<rect x="666.94" y="223.50" width="6.25" height="134.17" fill="#fcd27c"/>
<rect x="666.94" y="357.37" width="6.25" height="152.03" fill="url(#lanegrad)"/>
<rect x="666.94" y="509.10" width="6.25" height="62.78" fill="#00cccc"/>
<rect x="666.94" y="571.58" width="6.25" height="187.42" fill="#000080"/>
<rect x="666.94" y="759.00" width="6.25" height="9.00" fill="#808080"/>
<rect x="674.38" y="223.50" width="6.25" height="134.17" fill="#fcd27c"/>
<rect x="674.38" y="357.37" width="6.25" height="214.50" fill="url(#lanegrad)"/>
<rect x="674.38" y="571.58" width="6.25" height="44.92" fill="#00cccc"/>
<rect x="674.38" y="616.20" width="6.25" height="142.80" fill="#000080"/>
<rect x="674.38" y="759.00" width="6.25" height="9.00" fill="#808080"/>
<rect x="681.82" y="223.50" width="6.25" height="134.17" fill="#fcd27c"/>
<rect x="681.82" y="357.37" width="6.25" height="259.13" fill="url(#lanegrad)"/>
<rect x="681.82" y="616.20" width="6.25" height="18.15" fill="#0000cc"/>
<rect x="681.82" y="634.05" width="6.25" height="124.95" fill="#000080"/>
<rect x="681.82" y="759.00" width="6.25" height="9.00" fill="#808080"/>
<rect x="689.26" y="223.50" width="6.25" height="134.17" fill="#fcd27c"/>
<rect x="689.26" y="357.37" width="6.25" height="276.97" fill="url(#lanegrad)"/>
<rect x="689.26" y="634.05" width="6.25" height="36.00" fill="#00cccc"/>
<rect x="689.26" y="669.75" width="6.25" height="89.25" fill="#000080"/>
<rect x="689.26" y="759.00" width="6.25" height="9.00" fill="#000"/>
<rect x="688.06" y="223.50" width="8.65" height="9.00" fill="#000"/>
<rect x="696.70" y="223.50" width="6.25" height="134.17" fill="#fcd27c"/>
<rect x="696.70" y="357.37" width="6.25" height="276.97" fill="url(#lanegrad)"/>
<rect x="696.70" y="634.05" width="6.25" height="71.70" fill="#00cccc"/>
<rect x="696.70" y="705.45" width="6.25" height="53.55" fill="#000080"/>
<rect x="696.70" y="759.00" width="6.25" height="9.00" fill="#808080"/>
<rect x="704.14" y="223.50" width="6.25" height="134.17" fill="#fcd27c"/>
<rect x="704.14" y="357.37" width="6.25" height="330.53" fill="url(#lanegrad)"/>
<rect x="704.14" y="687.60" width="6.25" height="18.15" fill="#00cccc"/>
<rect x="704.14" y="705.45" width="6.25" height="53.55" fill="#000080"/>
<rect x="704.14" y="759.00" width="6.25" height="9.00" fill="#808080"/>
<rect x="711.58" y="223.50" width="6.25" height="134.17" fill="#fcd27c"/>
<rect x="711.58" y="357.37" width="6.25" height="330.53" fill="url(#lanegrad)"/>
<rect x="711.58" y="687.60" width="6.25" height="18.15" fill="#00cccc"/>
<rect x="711.58" y="705.45" width="6.25" height="53.55" fill="#000080"/>
<rect x="711.58" y="759.00" width="6.25" height="9.00" fill="#808080"/>
<rect x="719.02" y="223.50" width="6.25" height="134.17" fill="#fcd27c"/>
<rect x="719.02" y="357.37" width="6.25" height="330.53" fill="url(#lanegrad)"/>
<rect x="719.02" y="687.60" width="6.25" height="71.40" fill="#00cccc"/>
<rect x="719.02" y="759.00" width="6.25" height="9.00" fill="#808080"/>
<rect x="726.46" y="223.50" width="6.25" height="134.17" fill="#fcd27c"/>
<rect x="726.46" y="357.37" width="6.25" height="330.53" fill="url(#lanegrad)"/>
<rect x="726.46" y="687.60" width="6.25" height="71.40" fill="#00cccc"/>
<rect x="726.46" y="759.00" width="6.25" height="9.00" fill="#000"/>
<rect x="725.26" y="223.50" width="8.65" height="9.00" fill="#000"/>
<rect x="733.90" y="223.50" width="6.25" height="134.17" fill="#fcd27c"/>
<rect x="733.90" y="357.37" width="6.25" height="384.07" fill="url(#lanegrad)"/>
<rect x="733.90" y="741.15" width="6.25" height="17.85" fill="#00cccc"/>
<rect x="733.90" y="759.00" width="6.25" height="9.00" fill="#808080"/>
<rect x="741.34" y="223.50" width="6.25" height="134.17" fill="#fcd27c"/>
<rect x="741.34" y="357.37" width="6.25" height="401.63" fill="url(#lanegrad)"/>
<rect x="741.34" y="759.00" width="6.25" height="9.00" fill="#808080"/>
<rect x="748.78" y="223.50" width="6.25" height="134.17" fill="#fcd27c"/>
<rect x="748.78" y="357.37" width="6.25" height="401.63" fill="url(#lanegrad)"/>
<rect x="748.78" y="759.00" width="6.25" height="9.00" fill="#808080"/>
<rect x="756.22" y="223.50" width="6.08" height="535.50" fill="#fcd27c"/>
<rect x="756.22" y="759.00" width="6.08" height="9.00" fill="#808080"/>
<rect x="473.5" y="713.73" width="288.80" height="1.3" fill="#000"/>
<rect x="473.5" y="669.10" width="288.80" height="1.3" fill="#000"/>
<rect x="473.5" y="624.48" width="288.80" height="1.3" fill="#000"/>
<rect x="473.5" y="579.85" width="288.80" height="1.3" fill="#000"/>
<rect x="473.5" y="535.23" width="288.80" height="1.3" fill="#000"/>
<rect x="473.5" y="490.60" width="288.80" height="1.3" fill="#000"/>
<rect x="473.5" y="445.98" width="288.80" height="1.3" fill="#000"/>
<rect x="473.5" y="401.35" width="288.80" height="1.3" fill="#000"/>
<rect x="473.5" y="356.72" width="288.80" height="1.3" fill="#000"/>
<rect x="473.5" y="312.10" width="288.80" height="1.3" fill="#000"/>
<rect x="473.5" y="267.47" width="288.80" height="1.3" fill="#000"/>
<rect x="473.5" y="222.85" width="288.80" height="1.3" fill="#000"/>
<rect x="472.7" y="159.6" width="290.5" height="608.4" fill="none" stroke="#606060" stroke-width="1.3"/>
<text transform="translate(781.8,712.38) rotate(-90) scale(0.36,1)" font-size="19.5" fill="#000" text-anchor="end">5</text>
<text transform="translate(781.8,667.75) rotate(-90) scale(0.36,1)" font-size="19.5" fill="#000" text-anchor="end">10</text>
<text transform="translate(781.8,623.12) rotate(-90) scale(0.36,1)" font-size="19.5" fill="#000" text-anchor="end">15</text>
<text transform="translate(781.8,578.50) rotate(-90) scale(0.36,1)" font-size="19.5" fill="#000" text-anchor="end">20</text>
<text transform="translate(781.8,533.88) rotate(-90) scale(0.36,1)" font-size="19.5" fill="#000" text-anchor="end">25</text>
<text transform="translate(781.8,489.25) rotate(-90) scale(0.36,1)" font-size="19.5" fill="#000" text-anchor="end">30</text>
<text transform="translate(781.8,444.62) rotate(-90) scale(0.36,1)" font-size="19.5" fill="#000" text-anchor="end">35</text>
<text transform="translate(781.8,400.00) rotate(-90) scale(0.36,1)" font-size="19.5" fill="#000" text-anchor="end">40</text>
<text transform="translate(781.8,355.37) rotate(-90) scale(0.36,1)" font-size="19.5" fill="#000" text-anchor="end">45</text>
<text transform="translate(781.8,310.75) rotate(-90) scale(0.36,1)" font-size="19.5" fill="#000" text-anchor="end">50</text>
<text transform="translate(781.8,266.12) rotate(-90) scale(0.36,1)" font-size="19.5" fill="#000" text-anchor="end">55</text>
<text transform="translate(512.59,221.4) rotate(-90) scale(0.33,1)" font-size="17.3" fill="#000" text-anchor="start">5</text>
<text transform="translate(549.79,221.4) rotate(-90) scale(0.33,1)" font-size="17.3" fill="#000" text-anchor="start">10</text>
<text transform="translate(586.99,221.4) rotate(-90) scale(0.33,1)" font-size="17.3" fill="#000" text-anchor="start">15</text>
<text transform="translate(624.19,221.4) rotate(-90) scale(0.33,1)" font-size="17.3" fill="#000" text-anchor="start">20</text>
<text transform="translate(661.38,221.4) rotate(-90) scale(0.33,1)" font-size="17.3" fill="#000" text-anchor="start">15</text>
<text transform="translate(698.59,221.4) rotate(-90) scale(0.33,1)" font-size="17.3" fill="#000" text-anchor="start">10</text>
<text transform="translate(735.79,221.4) rotate(-90) scale(0.33,1)" font-size="17.3" fill="#000" text-anchor="start">5</text>
<rect x="41.9" y="846.8" width="711.6" height="165" rx="4.5" ry="4.5" fill="#fff" stroke="#d2d2d2" stroke-width="1.5"/>
<rect x="33.8" y="847.4" width="727.4" height="173.6" fill="none" stroke="#9a9a9a" stroke-width="1"/>
<rect x="33.7" y="778.4" width="727.5" height="69.6" fill="none" stroke="#505050" stroke-width="1.4"/>
<rect x="123.0" y="779" width="1.1" height="68.4" fill="#a4a4a4"/>
<rect x="226.9" y="779" width="1.1" height="68.4" fill="#a4a4a4"/>
<rect x="330.9" y="779" width="1.1" height="68.4" fill="#a4a4a4"/>
<rect x="434.8" y="779" width="1.1" height="68.4" fill="#a4a4a4"/>
<rect x="539.2" y="779" width="1.1" height="68.4" fill="#a4a4a4"/>
<rect x="643.8" y="779" width="1.1" height="68.4" fill="#a4a4a4"/>
<rect x="33.8" y="801.8" width="727.4" height="1.1" fill="#a8a8a8"/>
<rect x="33.8" y="825.9" width="727.4" height="0.8" fill="#e4e4e4"/>
<path d="M34.6,803.6 H122.6 V826.6 H34.6 Z" fill="none" stroke="#000" stroke-width="1.6"/>
<rect x="34" y="826" width="90" height="2" fill="#000"/>
<text x="71" y="797.1" font-size="10.5" font-weight="normal" fill="#222" text-anchor="start" textLength="15.7" lengthAdjust="spacingAndGlyphs" >Item</text>
<text x="147" y="797.1" font-size="10.5" font-weight="normal" fill="#222" text-anchor="start" textLength="55.3" lengthAdjust="spacingAndGlyphs" >3L-7L:18L-18R</text>
<text x="250.5" y="797.1" font-size="10.5" font-weight="normal" fill="#222" text-anchor="start" textLength="57.0" lengthAdjust="spacingAndGlyphs" >8L-12L:18L-18R</text>
<text x="352.6" y="797.1" font-size="10.5" font-weight="normal" fill="#222" text-anchor="start" textLength="63.6" lengthAdjust="spacingAndGlyphs" >13L-17L:18L-18R</text>
<text x="453.7" y="797.1" font-size="10.5" font-weight="normal" fill="#222" text-anchor="start" textLength="68.1" lengthAdjust="spacingAndGlyphs" >18L-18R:17R-13R</text>
<text x="561.3" y="797.1" font-size="10.5" font-weight="normal" fill="#222" text-anchor="start" textLength="62.6" lengthAdjust="spacingAndGlyphs" >18L-18R:12R-8R</text>
<text x="674.2" y="797.1" font-size="10.5" font-weight="normal" fill="#222" text-anchor="start" textLength="58.9" lengthAdjust="spacingAndGlyphs" >18L-18R:7R-3R</text>
<text x="36.3" y="819.6" font-size="12.8" font-weight="normal" fill="#1a1a1a" text-anchor="start" textLength="52.7" lengthAdjust="spacingAndGlyphs" >Description</text>
<text x="125.5" y="819.6" font-size="12.8" font-weight="normal" fill="#1a1a1a" text-anchor="start" textLength="97.2" lengthAdjust="spacingAndGlyphs" >Outside Track:Middle</text>
<text x="229.9" y="819.6" font-size="12.8" font-weight="normal" fill="#1a1a1a" text-anchor="start" textLength="94.3" lengthAdjust="spacingAndGlyphs" >Middle Track:Middle</text>
<text x="334.4" y="819.6" font-size="12.8" font-weight="normal" fill="#1a1a1a" text-anchor="start" textLength="88.7" lengthAdjust="spacingAndGlyphs" >Inside Track:Middle</text>
<text x="438.7" y="819.6" font-size="12.8" font-weight="normal" fill="#1a1a1a" text-anchor="start" textLength="91.7" lengthAdjust="spacingAndGlyphs" >MIddle: Inside Track</text>
<text x="542" y="819.6" font-size="12.8" font-weight="normal" fill="#1a1a1a" text-anchor="start" textLength="95.2" lengthAdjust="spacingAndGlyphs" >Middle:Middle Track</text>
<text x="647" y="819.6" font-size="12.8" font-weight="normal" fill="#1a1a1a" text-anchor="start" textLength="96.9" lengthAdjust="spacingAndGlyphs" >Middle:Outside Track</text>
<text x="36.3" y="842.7" font-size="12.8" font-weight="normal" fill="#1a1a1a" text-anchor="start" textLength="76.7" lengthAdjust="spacingAndGlyphs" >Track Zone Ratio</text>
<text x="166.4" y="842.7" font-size="12.8" font-weight="normal" fill="#1a1a1a" text-anchor="start" textLength="18.5" lengthAdjust="spacingAndGlyphs" >6.56</text>
<text x="271.3" y="842.7" font-size="12.8" font-weight="normal" fill="#1a1a1a" text-anchor="start" textLength="17.6" lengthAdjust="spacingAndGlyphs" >2.33</text>
<text x="376.3" y="842.7" font-size="12.8" font-weight="normal" fill="#1a1a1a" text-anchor="start" textLength="17.1" lengthAdjust="spacingAndGlyphs" >1.06</text>
<text x="480.5" y="842.7" font-size="12.8" font-weight="normal" fill="#1a1a1a" text-anchor="start" textLength="17.3" lengthAdjust="spacingAndGlyphs" >1.06</text>
<text x="583.5" y="842.7" font-size="12.8" font-weight="normal" fill="#1a1a1a" text-anchor="start" textLength="18.2" lengthAdjust="spacingAndGlyphs" >2.33</text>
<text x="694" y="842.7" font-size="12.8" font-weight="normal" fill="#1a1a1a" text-anchor="start" textLength="18.4" lengthAdjust="spacingAndGlyphs" >6.56</text>
<line x1="90.85" y1="862" x2="90.85" y2="981.5" stroke="#d4d4d4" stroke-width="0.8" stroke-dasharray="3,2"/>
<line x1="107.30" y1="862" x2="107.30" y2="981.5" stroke="#d4d4d4" stroke-width="0.8" stroke-dasharray="3,2"/>
<line x1="123.75" y1="862" x2="123.75" y2="981.5" stroke="#d4d4d4" stroke-width="0.8" stroke-dasharray="3,2"/>
<line x1="140.20" y1="862" x2="140.20" y2="981.5" stroke="#d4d4d4" stroke-width="0.8" stroke-dasharray="3,2"/>
<line x1="156.65" y1="862" x2="156.65" y2="981.5" stroke="#d4d4d4" stroke-width="0.8" stroke-dasharray="3,2"/>
<line x1="173.10" y1="862" x2="173.10" y2="981.5" stroke="#d4d4d4" stroke-width="0.8" stroke-dasharray="3,2"/>
<line x1="189.55" y1="862" x2="189.55" y2="981.5" stroke="#d4d4d4" stroke-width="0.8" stroke-dasharray="3,2"/>
<line x1="206.00" y1="862" x2="206.00" y2="981.5" stroke="#d4d4d4" stroke-width="0.8" stroke-dasharray="3,2"/>
<line x1="222.45" y1="862" x2="222.45" y2="981.5" stroke="#d4d4d4" stroke-width="0.8" stroke-dasharray="3,2"/>
<line x1="238.90" y1="862" x2="238.90" y2="981.5" stroke="#d4d4d4" stroke-width="0.8" stroke-dasharray="3,2"/>
<line x1="255.35" y1="862" x2="255.35" y2="981.5" stroke="#d4d4d4" stroke-width="0.8" stroke-dasharray="3,2"/>
<line x1="271.80" y1="862" x2="271.80" y2="981.5" stroke="#d4d4d4" stroke-width="0.8" stroke-dasharray="3,2"/>
<line x1="288.25" y1="862" x2="288.25" y2="981.5" stroke="#d4d4d4" stroke-width="0.8" stroke-dasharray="3,2"/>
<line x1="304.70" y1="862" x2="304.70" y2="981.5" stroke="#d4d4d4" stroke-width="0.8" stroke-dasharray="3,2"/>
<line x1="321.15" y1="862" x2="321.15" y2="981.5" stroke="#d4d4d4" stroke-width="0.8" stroke-dasharray="3,2"/>
<line x1="337.60" y1="862" x2="337.60" y2="981.5" stroke="#d4d4d4" stroke-width="0.8" stroke-dasharray="3,2"/>
<line x1="354.05" y1="862" x2="354.05" y2="981.5" stroke="#d4d4d4" stroke-width="0.8" stroke-dasharray="3,2"/>
<line x1="370.50" y1="862" x2="370.50" y2="981.5" stroke="#d4d4d4" stroke-width="0.8" stroke-dasharray="3,2"/>
<line x1="386.95" y1="862" x2="386.95" y2="981.5" stroke="#d4d4d4" stroke-width="0.8" stroke-dasharray="3,2"/>
<line x1="403.40" y1="862" x2="403.40" y2="981.5" stroke="#d4d4d4" stroke-width="0.8" stroke-dasharray="3,2"/>
<line x1="419.85" y1="862" x2="419.85" y2="981.5" stroke="#d4d4d4" stroke-width="0.8" stroke-dasharray="3,2"/>
<line x1="436.30" y1="862" x2="436.30" y2="981.5" stroke="#d4d4d4" stroke-width="0.8" stroke-dasharray="3,2"/>
<line x1="452.75" y1="862" x2="452.75" y2="981.5" stroke="#d4d4d4" stroke-width="0.8" stroke-dasharray="3,2"/>
<line x1="469.20" y1="862" x2="469.20" y2="981.5" stroke="#d4d4d4" stroke-width="0.8" stroke-dasharray="3,2"/>
<line x1="485.65" y1="862" x2="485.65" y2="981.5" stroke="#d4d4d4" stroke-width="0.8" stroke-dasharray="3,2"/>
<line x1="502.10" y1="862" x2="502.10" y2="981.5" stroke="#d4d4d4" stroke-width="0.8" stroke-dasharray="3,2"/>
<line x1="518.55" y1="862" x2="518.55" y2="981.5" stroke="#d4d4d4" stroke-width="0.8" stroke-dasharray="3,2"/>
<line x1="535.00" y1="862" x2="535.00" y2="981.5" stroke="#d4d4d4" stroke-width="0.8" stroke-dasharray="3,2"/>
<line x1="551.45" y1="862" x2="551.45" y2="981.5" stroke="#d4d4d4" stroke-width="0.8" stroke-dasharray="3,2"/>
<line x1="567.90" y1="862" x2="567.90" y2="981.5" stroke="#d4d4d4" stroke-width="0.8" stroke-dasharray="3,2"/>
<line x1="584.35" y1="862" x2="584.35" y2="981.5" stroke="#d4d4d4" stroke-width="0.8" stroke-dasharray="3,2"/>
<line x1="600.80" y1="862" x2="600.80" y2="981.5" stroke="#d4d4d4" stroke-width="0.8" stroke-dasharray="3,2"/>
<line x1="617.25" y1="862" x2="617.25" y2="981.5" stroke="#d4d4d4" stroke-width="0.8" stroke-dasharray="3,2"/>
<line x1="633.70" y1="862" x2="633.70" y2="981.5" stroke="#d4d4d4" stroke-width="0.8" stroke-dasharray="3,2"/>
<line x1="650.15" y1="862" x2="650.15" y2="981.5" stroke="#d4d4d4" stroke-width="0.8" stroke-dasharray="3,2"/>
<line x1="666.60" y1="862" x2="666.60" y2="981.5" stroke="#d4d4d4" stroke-width="0.8" stroke-dasharray="3,2"/>
<line x1="683.05" y1="862" x2="683.05" y2="981.5" stroke="#d4d4d4" stroke-width="0.8" stroke-dasharray="3,2"/>
<line x1="699.50" y1="862" x2="699.50" y2="981.5" stroke="#d4d4d4" stroke-width="0.8" stroke-dasharray="3,2"/>
<line x1="715.95" y1="862" x2="715.95" y2="981.5" stroke="#d4d4d4" stroke-width="0.8" stroke-dasharray="3,2"/>
<line x1="75" y1="969.95" x2="740.5" y2="969.95" stroke="#333" stroke-width="1.4" stroke-dasharray="1.6,1.2"/>
<line x1="75" y1="957.90" x2="740.5" y2="957.90" stroke="#333" stroke-width="1.4" stroke-dasharray="1.6,1.2"/>
<line x1="75" y1="945.85" x2="740.5" y2="945.85" stroke="#333" stroke-width="1.4" stroke-dasharray="1.6,1.2"/>
<line x1="75" y1="933.80" x2="740.5" y2="933.80" stroke="#333" stroke-width="1.4" stroke-dasharray="1.6,1.2"/>
<line x1="75" y1="921.75" x2="740.5" y2="921.75" stroke="#333" stroke-width="1.4" stroke-dasharray="1.6,1.2"/>
<line x1="75" y1="909.70" x2="740.5" y2="909.70" stroke="#333" stroke-width="1.4" stroke-dasharray="1.6,1.2"/>
<line x1="75" y1="897.65" x2="740.5" y2="897.65" stroke="#333" stroke-width="1.4" stroke-dasharray="1.6,1.2"/>
<line x1="75" y1="885.60" x2="740.5" y2="885.60" stroke="#333" stroke-width="1.4" stroke-dasharray="1.6,1.2"/>
<line x1="75" y1="873.55" x2="740.5" y2="873.55" stroke="#333" stroke-width="1.4" stroke-dasharray="1.6,1.2"/>
<rect x="86.85" y="981.00" width="8" height="1" fill="#000"/>
<rect x="103.30" y="981.00" width="8" height="1" fill="#000"/>
<rect x="119.75" y="977.98" width="8" height="4.02" fill="#00cccc"/>
<rect x="120.25" y="978.48" width="7" height="3.52" fill="none" stroke="#101010" stroke-width="1"/>
<rect x="136.20" y="973.97" width="8" height="8.03" fill="#00cccc"/>
<rect x="136.70" y="974.47" width="7" height="7.53" fill="none" stroke="#101010" stroke-width="1"/>
<rect x="152.65" y="965.93" width="8" height="16.07" fill="#00cccc"/>
<rect x="153.15" y="966.43" width="7" height="15.57" fill="none" stroke="#101010" stroke-width="1"/>
<rect x="169.10" y="965.93" width="8" height="16.07" fill="#00cccc"/>
<rect x="169.60" y="966.43" width="7" height="15.57" fill="none" stroke="#101010" stroke-width="1"/>
<rect x="185.55" y="961.92" width="8" height="4.02" fill="#0000f0"/>
<rect x="185.55" y="965.93" width="8" height="16.07" fill="#00cccc"/>
<rect x="186.05" y="962.42" width="7" height="19.58" fill="none" stroke="#101010" stroke-width="1"/>
<line x1="185.55" y1="965.93" x2="193.55" y2="965.93" stroke="#102040" stroke-width="0.6"/>
<rect x="202.00" y="961.92" width="8" height="4.02" fill="#0000f0"/>
<rect x="202.00" y="965.93" width="8" height="16.07" fill="#00cccc"/>
<rect x="202.50" y="962.42" width="7" height="19.58" fill="none" stroke="#101010" stroke-width="1"/>
<line x1="202.00" y1="965.93" x2="210.00" y2="965.93" stroke="#102040" stroke-width="0.6"/>
<rect x="218.45" y="953.88" width="8" height="4.02" fill="#0000f0"/>
<rect x="218.45" y="957.90" width="8" height="24.10" fill="#00cccc"/>
<rect x="218.95" y="954.38" width="7" height="27.62" fill="none" stroke="#101010" stroke-width="1"/>
<line x1="218.45" y1="957.90" x2="226.45" y2="957.90" stroke="#102040" stroke-width="0.6"/>
<rect x="234.90" y="945.85" width="8" height="12.05" fill="#0000f0"/>
<rect x="234.90" y="957.90" width="8" height="24.10" fill="#00cccc"/>
<rect x="235.40" y="946.35" width="7" height="35.65" fill="none" stroke="#101010" stroke-width="1"/>
<line x1="234.90" y1="957.90" x2="242.90" y2="957.90" stroke="#102040" stroke-width="0.6"/>
<rect x="251.35" y="937.82" width="8" height="20.08" fill="#0000f0"/>
<rect x="251.35" y="957.90" width="8" height="24.10" fill="#00cccc"/>
<rect x="251.85" y="938.32" width="7" height="43.68" fill="none" stroke="#101010" stroke-width="1"/>
<line x1="251.35" y1="957.90" x2="259.35" y2="957.90" stroke="#102040" stroke-width="0.6"/>
<rect x="267.80" y="929.78" width="8" height="20.08" fill="#0000f0"/>
<rect x="267.80" y="949.87" width="8" height="32.13" fill="#00cccc"/>
<rect x="268.30" y="930.28" width="7" height="51.72" fill="none" stroke="#101010" stroke-width="1"/>
<line x1="267.80" y1="949.87" x2="275.80" y2="949.87" stroke="#102040" stroke-width="0.6"/>
<rect x="284.25" y="913.72" width="8" height="28.12" fill="#0000f0"/>
<rect x="284.25" y="941.83" width="8" height="40.17" fill="#00cccc"/>
<rect x="284.75" y="914.22" width="7" height="67.78" fill="none" stroke="#101010" stroke-width="1"/>
<line x1="284.25" y1="941.83" x2="292.25" y2="941.83" stroke="#102040" stroke-width="0.6"/>
<rect x="300.70" y="905.68" width="8" height="28.12" fill="#0000f0"/>
<rect x="300.70" y="933.80" width="8" height="48.20" fill="#00cccc"/>
<rect x="301.20" y="906.18" width="7" height="75.82" fill="none" stroke="#101010" stroke-width="1"/>
<line x1="300.70" y1="933.80" x2="308.70" y2="933.80" stroke="#102040" stroke-width="0.6"/>
<rect x="317.15" y="897.65" width="8" height="36.15" fill="#0000f0"/>
<rect x="317.15" y="933.80" width="8" height="48.20" fill="#00cccc"/>
<rect x="317.65" y="898.15" width="7" height="83.85" fill="none" stroke="#101010" stroke-width="1"/>
<line x1="317.15" y1="933.80" x2="325.15" y2="933.80" stroke="#102040" stroke-width="0.6"/>
<rect x="333.60" y="897.65" width="8" height="36.15" fill="#0000f0"/>
<rect x="333.60" y="933.80" width="8" height="48.20" fill="#00cccc"/>
<rect x="334.10" y="898.15" width="7" height="83.85" fill="none" stroke="#101010" stroke-width="1"/>
<line x1="333.60" y1="933.80" x2="341.60" y2="933.80" stroke="#102040" stroke-width="0.6"/>
<rect x="350.05" y="897.65" width="8" height="36.15" fill="#0000f0"/>
<rect x="350.05" y="933.80" width="8" height="48.20" fill="#00cccc"/>
<rect x="350.55" y="898.15" width="7" height="83.85" fill="none" stroke="#101010" stroke-width="1"/>
<line x1="350.05" y1="933.80" x2="358.05" y2="933.80" stroke="#102040" stroke-width="0.6"/>
<rect x="366.50" y="897.65" width="8" height="36.15" fill="#0000f0"/>
<rect x="366.50" y="933.80" width="8" height="48.20" fill="#00cccc"/>
<rect x="367.00" y="898.15" width="7" height="83.85" fill="none" stroke="#101010" stroke-width="1"/>
<line x1="366.50" y1="933.80" x2="374.50" y2="933.80" stroke="#102040" stroke-width="0.6"/>
<rect x="382.95" y="897.65" width="8" height="36.15" fill="#0000f0"/>
<rect x="382.95" y="933.80" width="8" height="48.20" fill="#00cccc"/>
<rect x="383.45" y="898.15" width="7" height="83.85" fill="none" stroke="#101010" stroke-width="1"/>
<line x1="382.95" y1="933.80" x2="390.95" y2="933.80" stroke="#102040" stroke-width="0.6"/>
<rect x="399.40" y="897.65" width="8" height="36.15" fill="#0000f0"/>
<rect x="399.40" y="933.80" width="8" height="48.20" fill="#00cccc"/>
<rect x="399.90" y="898.15" width="7" height="83.85" fill="none" stroke="#101010" stroke-width="1"/>
<line x1="399.40" y1="933.80" x2="407.40" y2="933.80" stroke="#102040" stroke-width="0.6"/>
<rect x="415.85" y="897.65" width="8" height="36.15" fill="#0000f0"/>
<rect x="415.85" y="933.80" width="8" height="48.20" fill="#00cccc"/>
<rect x="416.35" y="898.15" width="7" height="83.85" fill="none" stroke="#101010" stroke-width="1"/>
<line x1="415.85" y1="933.80" x2="423.85" y2="933.80" stroke="#102040" stroke-width="0.6"/>
<rect x="432.30" y="897.65" width="8" height="36.15" fill="#0000f0"/>
<rect x="432.30" y="933.80" width="8" height="48.20" fill="#00cccc"/>
<rect x="432.80" y="898.15" width="7" height="83.85" fill="none" stroke="#101010" stroke-width="1"/>
<line x1="432.30" y1="933.80" x2="440.30" y2="933.80" stroke="#102040" stroke-width="0.6"/>
<rect x="448.75" y="897.65" width="8" height="36.15" fill="#0000f0"/>
<rect x="448.75" y="933.80" width="8" height="48.20" fill="#00cccc"/>
<rect x="449.25" y="898.15" width="7" height="83.85" fill="none" stroke="#101010" stroke-width="1"/>
<line x1="448.75" y1="933.80" x2="456.75" y2="933.80" stroke="#102040" stroke-width="0.6"/>
<rect x="465.20" y="897.65" width="8" height="36.15" fill="#0000f0"/>
<rect x="465.20" y="933.80" width="8" height="48.20" fill="#00cccc"/>
<rect x="465.70" y="898.15" width="7" height="83.85" fill="none" stroke="#101010" stroke-width="1"/>
<line x1="465.20" y1="933.80" x2="473.20" y2="933.80" stroke="#102040" stroke-width="0.6"/>
<rect x="481.65" y="897.65" width="8" height="36.15" fill="#0000f0"/>
<rect x="481.65" y="933.80" width="8" height="48.20" fill="#00cccc"/>
<rect x="482.15" y="898.15" width="7" height="83.85" fill="none" stroke="#101010" stroke-width="1"/>
<line x1="481.65" y1="933.80" x2="489.65" y2="933.80" stroke="#102040" stroke-width="0.6"/>
<rect x="498.10" y="905.68" width="8" height="28.12" fill="#0000f0"/>
<rect x="498.10" y="933.80" width="8" height="48.20" fill="#00cccc"/>
<rect x="498.60" y="906.18" width="7" height="75.82" fill="none" stroke="#101010" stroke-width="1"/>
<line x1="498.10" y1="933.80" x2="506.10" y2="933.80" stroke="#102040" stroke-width="0.6"/>
<rect x="514.55" y="913.72" width="8" height="28.12" fill="#0000f0"/>
<rect x="514.55" y="941.83" width="8" height="40.17" fill="#00cccc"/>
<rect x="515.05" y="914.22" width="7" height="67.78" fill="none" stroke="#101010" stroke-width="1"/>
<line x1="514.55" y1="941.83" x2="522.55" y2="941.83" stroke="#102040" stroke-width="0.6"/>
<rect x="531.00" y="929.78" width="8" height="20.08" fill="#0000f0"/>
<rect x="531.00" y="949.87" width="8" height="32.13" fill="#00cccc"/>
<rect x="531.50" y="930.28" width="7" height="51.72" fill="none" stroke="#101010" stroke-width="1"/>
<line x1="531.00" y1="949.87" x2="539.00" y2="949.87" stroke="#102040" stroke-width="0.6"/>
<rect x="547.45" y="937.82" width="8" height="20.08" fill="#0000f0"/>
<rect x="547.45" y="957.90" width="8" height="24.10" fill="#00cccc"/>
<rect x="547.95" y="938.32" width="7" height="43.68" fill="none" stroke="#101010" stroke-width="1"/>
<line x1="547.45" y1="957.90" x2="555.45" y2="957.90" stroke="#102040" stroke-width="0.6"/>
<rect x="563.90" y="945.85" width="8" height="12.05" fill="#0000f0"/>
<rect x="563.90" y="957.90" width="8" height="24.10" fill="#00cccc"/>
<rect x="564.40" y="946.35" width="7" height="35.65" fill="none" stroke="#101010" stroke-width="1"/>
<line x1="563.90" y1="957.90" x2="571.90" y2="957.90" stroke="#102040" stroke-width="0.6"/>
<rect x="580.35" y="953.88" width="8" height="4.02" fill="#0000f0"/>
<rect x="580.35" y="957.90" width="8" height="24.10" fill="#00cccc"/>
<rect x="580.85" y="954.38" width="7" height="27.62" fill="none" stroke="#101010" stroke-width="1"/>
<line x1="580.35" y1="957.90" x2="588.35" y2="957.90" stroke="#102040" stroke-width="0.6"/>
<rect x="596.80" y="961.92" width="8" height="4.02" fill="#0000f0"/>
<rect x="596.80" y="965.93" width="8" height="16.07" fill="#00cccc"/>
<rect x="597.30" y="962.42" width="7" height="19.58" fill="none" stroke="#101010" stroke-width="1"/>
<line x1="596.80" y1="965.93" x2="604.80" y2="965.93" stroke="#102040" stroke-width="0.6"/>
<rect x="613.25" y="961.92" width="8" height="4.02" fill="#0000f0"/>
<rect x="613.25" y="965.93" width="8" height="16.07" fill="#00cccc"/>
<rect x="613.75" y="962.42" width="7" height="19.58" fill="none" stroke="#101010" stroke-width="1"/>
<line x1="613.25" y1="965.93" x2="621.25" y2="965.93" stroke="#102040" stroke-width="0.6"/>
<rect x="629.70" y="965.93" width="8" height="16.07" fill="#00cccc"/>
<rect x="630.20" y="966.43" width="7" height="15.57" fill="none" stroke="#101010" stroke-width="1"/>
<rect x="646.15" y="965.93" width="8" height="16.07" fill="#00cccc"/>
<rect x="646.65" y="966.43" width="7" height="15.57" fill="none" stroke="#101010" stroke-width="1"/>
<rect x="662.60" y="973.97" width="8" height="8.03" fill="#00cccc"/>
<rect x="663.10" y="974.47" width="7" height="7.53" fill="none" stroke="#101010" stroke-width="1"/>
<rect x="679.05" y="977.98" width="8" height="4.02" fill="#00cccc"/>
<rect x="679.55" y="978.48" width="7" height="3.52" fill="none" stroke="#101010" stroke-width="1"/>
<rect x="695.50" y="981.00" width="8" height="1" fill="#000"/>
<rect x="711.95" y="981.00" width="8" height="1" fill="#000"/>
<path d="M74.4,861.5 H740.9 V982 M74.4,861.5 V982 H740.9" fill="none" stroke="#505050" stroke-width="1.3"/>
<path d="M74.4,982 V988" stroke="#505050" stroke-width="1.2"/>
<line x1="90.85" y1="982" x2="90.85" y2="988.5" stroke="#404040" stroke-width="1.2"/>
<line x1="107.30" y1="982" x2="107.30" y2="988.5" stroke="#404040" stroke-width="1.2"/>
<line x1="123.75" y1="982" x2="123.75" y2="988.5" stroke="#404040" stroke-width="1.2"/>
<line x1="140.20" y1="982" x2="140.20" y2="988.5" stroke="#404040" stroke-width="1.2"/>
<line x1="156.65" y1="982" x2="156.65" y2="988.5" stroke="#404040" stroke-width="1.2"/>
<line x1="173.10" y1="982" x2="173.10" y2="988.5" stroke="#404040" stroke-width="1.2"/>
<line x1="189.55" y1="982" x2="189.55" y2="988.5" stroke="#404040" stroke-width="1.2"/>
<line x1="206.00" y1="982" x2="206.00" y2="988.5" stroke="#404040" stroke-width="1.2"/>
<line x1="222.45" y1="982" x2="222.45" y2="988.5" stroke="#404040" stroke-width="1.2"/>
<line x1="238.90" y1="982" x2="238.90" y2="988.5" stroke="#404040" stroke-width="1.2"/>
<line x1="255.35" y1="982" x2="255.35" y2="988.5" stroke="#404040" stroke-width="1.2"/>
<line x1="271.80" y1="982" x2="271.80" y2="988.5" stroke="#404040" stroke-width="1.2"/>
<line x1="288.25" y1="982" x2="288.25" y2="988.5" stroke="#404040" stroke-width="1.2"/>
<line x1="304.70" y1="982" x2="304.70" y2="988.5" stroke="#404040" stroke-width="1.2"/>
<line x1="321.15" y1="982" x2="321.15" y2="988.5" stroke="#404040" stroke-width="1.2"/>
<line x1="337.60" y1="982" x2="337.60" y2="988.5" stroke="#404040" stroke-width="1.2"/>
<line x1="354.05" y1="982" x2="354.05" y2="988.5" stroke="#404040" stroke-width="1.2"/>
<line x1="370.50" y1="982" x2="370.50" y2="988.5" stroke="#404040" stroke-width="1.2"/>
<line x1="386.95" y1="982" x2="386.95" y2="988.5" stroke="#404040" stroke-width="1.2"/>
<line x1="403.40" y1="982" x2="403.40" y2="988.5" stroke="#404040" stroke-width="1.2"/>
<line x1="419.85" y1="982" x2="419.85" y2="988.5" stroke="#404040" stroke-width="1.2"/>
<line x1="436.30" y1="982" x2="436.30" y2="988.5" stroke="#404040" stroke-width="1.2"/>
<line x1="452.75" y1="982" x2="452.75" y2="988.5" stroke="#404040" stroke-width="1.2"/>
<line x1="469.20" y1="982" x2="469.20" y2="988.5" stroke="#404040" stroke-width="1.2"/>
<line x1="485.65" y1="982" x2="485.65" y2="988.5" stroke="#404040" stroke-width="1.2"/>
<line x1="502.10" y1="982" x2="502.10" y2="988.5" stroke="#404040" stroke-width="1.2"/>
<line x1="518.55" y1="982" x2="518.55" y2="988.5" stroke="#404040" stroke-width="1.2"/>
<line x1="535.00" y1="982" x2="535.00" y2="988.5" stroke="#404040" stroke-width="1.2"/>
<line x1="551.45" y1="982" x2="551.45" y2="988.5" stroke="#404040" stroke-width="1.2"/>
<line x1="567.90" y1="982" x2="567.90" y2="988.5" stroke="#404040" stroke-width="1.2"/>
<line x1="584.35" y1="982" x2="584.35" y2="988.5" stroke="#404040" stroke-width="1.2"/>
<line x1="600.80" y1="982" x2="600.80" y2="988.5" stroke="#404040" stroke-width="1.2"/>
<line x1="617.25" y1="982" x2="617.25" y2="988.5" stroke="#404040" stroke-width="1.2"/>
<line x1="633.70" y1="982" x2="633.70" y2="988.5" stroke="#404040" stroke-width="1.2"/>
<line x1="650.15" y1="982" x2="650.15" y2="988.5" stroke="#404040" stroke-width="1.2"/>
<line x1="666.60" y1="982" x2="666.60" y2="988.5" stroke="#404040" stroke-width="1.2"/>
<line x1="683.05" y1="982" x2="683.05" y2="988.5" stroke="#404040" stroke-width="1.2"/>
<line x1="699.50" y1="982" x2="699.50" y2="988.5" stroke="#404040" stroke-width="1.2"/>
<line x1="715.95" y1="982" x2="715.95" y2="988.5" stroke="#404040" stroke-width="1.2"/>
<line x1="740.9" y1="982" x2="740.9" y2="988.5" stroke="#404040" stroke-width="1.2"/>
<line x1="69.8" y1="982.00" x2="74.4" y2="982.00" stroke="#505050" stroke-width="1.3"/>
<text transform="translate(67.6,984.70) scale(0.8,1)" font-size="7.3" font-weight="bold" fill="#3a3a48" text-anchor="end">0</text>
<line x1="69.8" y1="969.95" x2="74.4" y2="969.95" stroke="#505050" stroke-width="1.3"/>
<text transform="translate(67.6,972.65) scale(0.8,1)" font-size="7.3" font-weight="bold" fill="#3a3a48" text-anchor="end">150</text>
<line x1="69.8" y1="957.90" x2="74.4" y2="957.90" stroke="#505050" stroke-width="1.3"/>
<text transform="translate(67.6,960.60) scale(0.8,1)" font-size="7.3" font-weight="bold" fill="#3a3a48" text-anchor="end">300</text>
<line x1="69.8" y1="945.85" x2="74.4" y2="945.85" stroke="#505050" stroke-width="1.3"/>
<text transform="translate(67.6,948.55) scale(0.8,1)" font-size="7.3" font-weight="bold" fill="#3a3a48" text-anchor="end">450</text>
<line x1="69.8" y1="933.80" x2="74.4" y2="933.80" stroke="#505050" stroke-width="1.3"/>
<text transform="translate(67.6,936.50) scale(0.8,1)" font-size="7.3" font-weight="bold" fill="#3a3a48" text-anchor="end">600</text>
<line x1="69.8" y1="921.75" x2="74.4" y2="921.75" stroke="#505050" stroke-width="1.3"/>
<text transform="translate(67.6,924.45) scale(0.8,1)" font-size="7.3" font-weight="bold" fill="#3a3a48" text-anchor="end">750</text>
<line x1="69.8" y1="909.70" x2="74.4" y2="909.70" stroke="#505050" stroke-width="1.3"/>
<text transform="translate(67.6,912.40) scale(0.8,1)" font-size="7.3" font-weight="bold" fill="#3a3a48" text-anchor="end">900</text>
<line x1="69.8" y1="897.65" x2="74.4" y2="897.65" stroke="#505050" stroke-width="1.3"/>
<text transform="translate(67.6,900.35) scale(0.8,1)" font-size="7.3" font-weight="bold" fill="#3a3a48" text-anchor="end">1050</text>
<line x1="69.8" y1="885.60" x2="74.4" y2="885.60" stroke="#505050" stroke-width="1.3"/>
<text transform="translate(67.6,888.30) scale(0.8,1)" font-size="7.3" font-weight="bold" fill="#3a3a48" text-anchor="end">1200</text>
<line x1="69.8" y1="873.55" x2="74.4" y2="873.55" stroke="#505050" stroke-width="1.3"/>
<text transform="translate(67.6,876.25) scale(0.8,1)" font-size="7.3" font-weight="bold" fill="#3a3a48" text-anchor="end">1350</text>
<line x1="69.8" y1="861.50" x2="74.4" y2="861.50" stroke="#505050" stroke-width="1.3"/>
<text transform="translate(67.6,864.20) scale(0.8,1)" font-size="7.3" font-weight="bold" fill="#3a3a48" text-anchor="end">1500</text>
<text transform="translate(90.85,998.6) scale(0.8,1)" font-size="7.2" font-weight="bold" fill="#222230" text-anchor="middle">1</text>
<text transform="translate(107.30,998.6) scale(0.8,1)" font-size="7.2" font-weight="bold" fill="#222230" text-anchor="middle">2</text>
<text transform="translate(123.75,998.6) scale(0.8,1)" font-size="7.2" font-weight="bold" fill="#222230" text-anchor="middle">3</text>
<text transform="translate(140.20,998.6) scale(0.8,1)" font-size="7.2" font-weight="bold" fill="#222230" text-anchor="middle">4</text>
<text transform="translate(156.65,998.6) scale(0.8,1)" font-size="7.2" font-weight="bold" fill="#222230" text-anchor="middle">5</text>
<text transform="translate(173.10,998.6) scale(0.8,1)" font-size="7.2" font-weight="bold" fill="#222230" text-anchor="middle">6</text>
<text transform="translate(189.55,998.6) scale(0.8,1)" font-size="7.2" font-weight="bold" fill="#222230" text-anchor="middle">7</text>
<text transform="translate(206.00,998.6) scale(0.8,1)" font-size="7.2" font-weight="bold" fill="#222230" text-anchor="middle">8</text>
<text transform="translate(222.45,998.6) scale(0.8,1)" font-size="7.2" font-weight="bold" fill="#222230" text-anchor="middle">9</text>
<text transform="translate(238.90,998.6) scale(0.8,1)" font-size="7.2" font-weight="bold" fill="#222230" text-anchor="middle">10</text>
<text transform="translate(255.35,998.6) scale(0.8,1)" font-size="7.2" font-weight="bold" fill="#222230" text-anchor="middle">11</text>
<text transform="translate(271.80,998.6) scale(0.8,1)" font-size="7.2" font-weight="bold" fill="#222230" text-anchor="middle">12</text>
<text transform="translate(288.25,998.6) scale(0.8,1)" font-size="7.2" font-weight="bold" fill="#222230" text-anchor="middle">13</text>
<text transform="translate(304.70,998.6) scale(0.8,1)" font-size="7.2" font-weight="bold" fill="#222230" text-anchor="middle">14</text>
<text transform="translate(321.15,998.6) scale(0.8,1)" font-size="7.2" font-weight="bold" fill="#222230" text-anchor="middle">15</text>
<text transform="translate(337.60,998.6) scale(0.8,1)" font-size="7.2" font-weight="bold" fill="#222230" text-anchor="middle">16</text>
<text transform="translate(354.05,998.6) scale(0.8,1)" font-size="7.2" font-weight="bold" fill="#222230" text-anchor="middle">17</text>
<text transform="translate(370.50,998.6) scale(0.8,1)" font-size="7.2" font-weight="bold" fill="#222230" text-anchor="middle">18</text>
<text transform="translate(386.95,998.6) scale(0.8,1)" font-size="7.2" font-weight="bold" fill="#222230" text-anchor="middle">19</text>
<text transform="translate(403.40,998.6) scale(0.8,1)" font-size="7.2" font-weight="bold" fill="#222230" text-anchor="middle">20</text>
<text transform="translate(419.85,998.6) scale(0.8,1)" font-size="7.2" font-weight="bold" fill="#222230" text-anchor="middle">19</text>
<text transform="translate(436.30,998.6) scale(0.8,1)" font-size="7.2" font-weight="bold" fill="#222230" text-anchor="middle">18</text>
<text transform="translate(452.75,998.6) scale(0.8,1)" font-size="7.2" font-weight="bold" fill="#222230" text-anchor="middle">17</text>
<text transform="translate(469.20,998.6) scale(0.8,1)" font-size="7.2" font-weight="bold" fill="#222230" text-anchor="middle">16</text>
<text transform="translate(485.65,998.6) scale(0.8,1)" font-size="7.2" font-weight="bold" fill="#222230" text-anchor="middle">15</text>
<text transform="translate(502.10,998.6) scale(0.8,1)" font-size="7.2" font-weight="bold" fill="#222230" text-anchor="middle">14</text>
<text transform="translate(518.55,998.6) scale(0.8,1)" font-size="7.2" font-weight="bold" fill="#222230" text-anchor="middle">13</text>
<text transform="translate(535.00,998.6) scale(0.8,1)" font-size="7.2" font-weight="bold" fill="#222230" text-anchor="middle">12</text>
<text transform="translate(551.45,998.6) scale(0.8,1)" font-size="7.2" font-weight="bold" fill="#222230" text-anchor="middle">11</text>
<text transform="translate(567.90,998.6) scale(0.8,1)" font-size="7.2" font-weight="bold" fill="#222230" text-anchor="middle">10</text>
<text transform="translate(584.35,998.6) scale(0.8,1)" font-size="7.2" font-weight="bold" fill="#222230" text-anchor="middle">9</text>
<text transform="translate(600.80,998.6) scale(0.8,1)" font-size="7.2" font-weight="bold" fill="#222230" text-anchor="middle">8</text>
<text transform="translate(617.25,998.6) scale(0.8,1)" font-size="7.2" font-weight="bold" fill="#222230" text-anchor="middle">7</text>
<text transform="translate(633.70,998.6) scale(0.8,1)" font-size="7.2" font-weight="bold" fill="#222230" text-anchor="middle">6</text>
<text transform="translate(650.15,998.6) scale(0.8,1)" font-size="7.2" font-weight="bold" fill="#222230" text-anchor="middle">5</text>
<text transform="translate(666.60,998.6) scale(0.8,1)" font-size="7.2" font-weight="bold" fill="#222230" text-anchor="middle">4</text>
<text transform="translate(683.05,998.6) scale(0.8,1)" font-size="7.2" font-weight="bold" fill="#222230" text-anchor="middle">3</text>
<text transform="translate(699.50,998.6) scale(0.8,1)" font-size="7.2" font-weight="bold" fill="#222230" text-anchor="middle">2</text>
<text transform="translate(715.95,998.6) scale(0.8,1)" font-size="7.2" font-weight="bold" fill="#222230" text-anchor="middle">1</text>
</svg>
</body></html>
